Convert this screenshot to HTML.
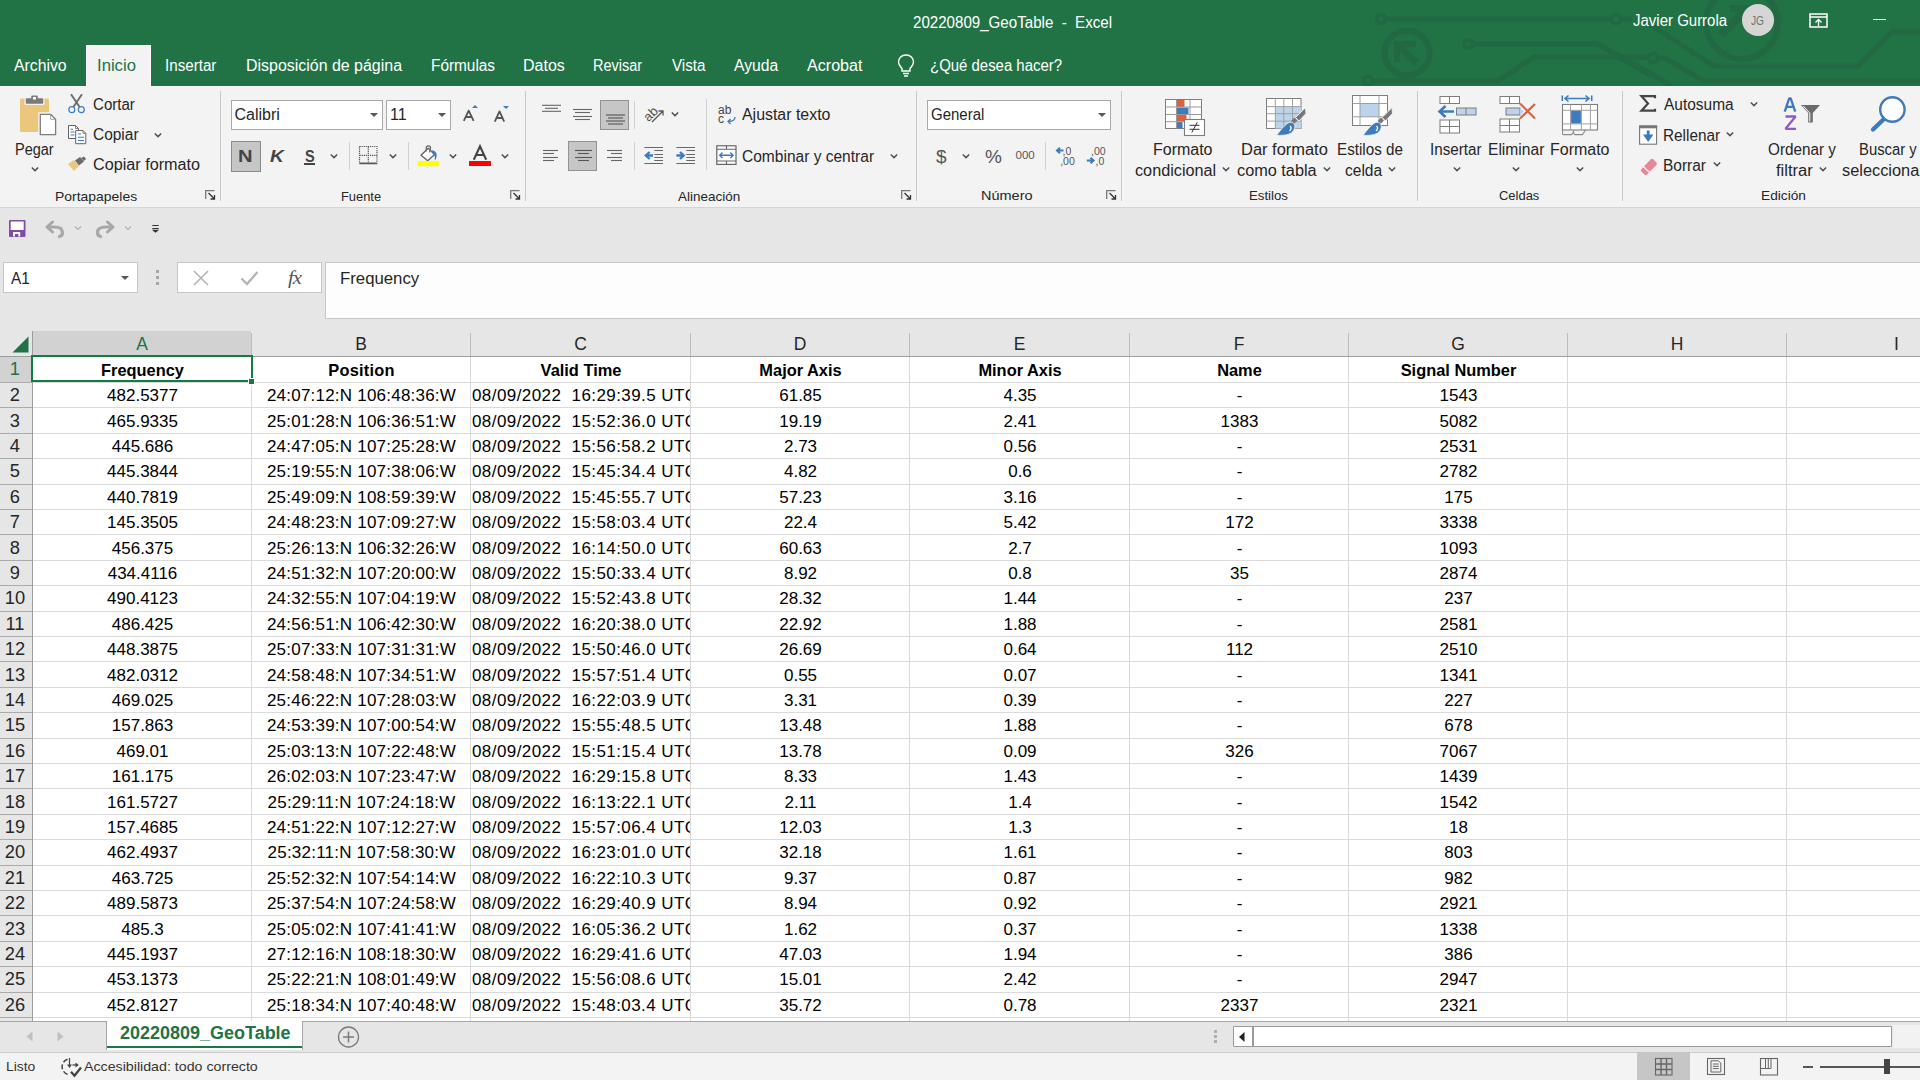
<!DOCTYPE html><html><head><meta charset="utf-8"><style>
html,body{margin:0;padding:0;width:1920px;height:1080px;overflow:hidden;background:#e6e6e6;position:relative;font-family:"Liberation Sans",sans-serif;}
.t{position:absolute;white-space:pre;line-height:1;}
svg{overflow:visible}
</style></head><body>
<div style="position:absolute;left:0px;top:0px;width:1920px;height:86px;background:#217346"></div>
<svg style="position:absolute;left:0px;top:0px;" width="1920" height="86" viewBox="0 0 1920 86"><g fill="none" stroke="#226843" stroke-width="5">
<path d="M1386 19 H1611"/><circle cx="1381" cy="19" r="4.5" stroke-width="3.5"/><circle cx="1616" cy="19" r="4.5" stroke-width="3.5"/><path d="M1621 19 H1632"/>
<circle cx="1407" cy="53" r="22.5" stroke-width="6"/>
<path d="M1473 44 H1598 L1650 75" /><circle cx="1468" cy="44" r="4.5" stroke-width="3.5"/>
<path d="M1373 81 H1498 L1534 57 H1647"/><circle cx="1368" cy="81" r="4.5" stroke-width="3.5"/>
<path d="M1658 58 H1665 L1704 81 H1920"/><circle cx="1653" cy="58" r="4.5" stroke-width="3.5"/>
<path d="M1620 56 L1672 86"/>
<path d="M1640 18 L1714 66 H1858 L1892 32 H1920"/>
<circle cx="1742" cy="23" r="36" stroke-width="6"/>
</g>
<g fill="#226843"><path d="M1394 41 H1416 V47 H1405 L1418.5 60.5 L1413.5 65.5 L1400 52 V62 H1394 Z"/>
<path d="M1730 5 H1752 V27 H1744 V18 L1724 38 L1718 32 L1738 12 H1730 Z"/></g></svg>
<div class="t" style="left:913.40px;top:15.19px;font-size:15.6px;color:#ffffff;font-weight:400;transform-origin:0 0;transform:scaleX(0.9688);">20220809_GeoTable  -  Excel</div>
<div class="t" style="left:1633.30px;top:12.96px;font-size:16px;color:#ffffff;font-weight:400;transform-origin:0 0;transform:scaleX(0.9366);">Javier Gurrola</div>
<div style="position:absolute;left:1742px;top:4px;width:32px;height:32px;border-radius:50%;background:#d6d6d6"></div>
<div class="t" style="left:1750.50px;top:14.62px;font-size:12.5px;color:#737373;font-weight:400;transform-origin:0 0;transform:scaleX(0.8197);">JG</div>
<svg style="position:absolute;left:1809px;top:13px;" width="20" height="16" viewBox="0 0 20 16"><rect x="1" y="1" width="17" height="13" fill="none" stroke="#fff" stroke-width="1.5"/><path d="M1 4 H18" stroke="#fff" stroke-width="1.5"/><path d="M9.5 13 V7 M6.5 9.5 L9.5 6.5 L12.5 9.5" stroke="#fff" stroke-width="1.3" fill="none"/></svg>
<div style="position:absolute;left:1873px;top:19px;width:13px;height:1.2px;background:#fff"></div>
<div style="position:absolute;left:86px;top:45px;width:65px;height:41px;background:#f3f3f3;box-shadow:inset 1px 1px 0 #fff,inset -1px 0 0 #fff"></div>
<div class="t" style="left:14.00px;top:57.66px;font-size:16px;color:#ffffff;font-weight:400;transform-origin:0 0;transform:scaleX(0.9859);">Archivo</div>
<div class="t" style="left:96.96px;top:57.66px;font-size:16px;color:#217346;font-weight:400;transform-origin:0 0;transform:scaleX(1.0424);">Inicio</div>
<div class="t" style="left:164.65px;top:57.66px;font-size:16px;color:#ffffff;font-weight:400;transform-origin:0 0;transform:scaleX(0.9478);">Insertar</div>
<div class="t" style="left:245.90px;top:57.66px;font-size:16px;color:#ffffff;font-weight:400;transform-origin:0 0;transform:scaleX(0.9965);">Disposición de página</div>
<div class="t" style="left:430.74px;top:57.66px;font-size:16px;color:#ffffff;font-weight:400;transform-origin:0 0;transform:scaleX(0.9607);">Fórmulas</div>
<div class="t" style="left:523.00px;top:57.66px;font-size:16px;color:#ffffff;font-weight:400;transform-origin:0 0;transform:scaleX(1.0001);">Datos</div>
<div class="t" style="left:593.10px;top:57.66px;font-size:16px;color:#ffffff;font-weight:400;transform-origin:0 0;transform:scaleX(0.9034);">Revisar</div>
<div class="t" style="left:671.80px;top:57.66px;font-size:16px;color:#ffffff;font-weight:400;transform-origin:0 0;transform:scaleX(0.9468);">Vista</div>
<div class="t" style="left:734.00px;top:57.66px;font-size:16px;color:#ffffff;font-weight:400;transform-origin:0 0;transform:scaleX(0.9783);">Ayuda</div>
<div class="t" style="left:807.40px;top:57.66px;font-size:16px;color:#ffffff;font-weight:400;transform-origin:0 0;transform:scaleX(1.0055);">Acrobat</div>
<div class="t" style="left:930.37px;top:57.66px;font-size:16px;color:#ffffff;font-weight:400;transform-origin:0 0;transform:scaleX(0.9337);">¿Qué desea hacer?</div>
<svg style="position:absolute;left:896px;top:53px;" width="20" height="24" viewBox="0 0 20 24"><path d="M10 2 C5 2 2.5 5.5 2.5 9 C2.5 12 4.5 13.5 6 15.5 V18 H14 V15.5 C15.5 13.5 17.5 12 17.5 9 C17.5 5.5 15 2 10 2 Z" fill="none" stroke="#fff" stroke-width="1.4"/><path d="M7 20.5 H13 M8 23 H12" stroke="#fff" stroke-width="1.4"/></svg>
<div style="position:absolute;left:0px;top:86px;width:1920px;height:121px;background:#f3f3f3"></div>
<div style="position:absolute;left:0px;top:207px;width:1920px;height:1px;background:#d5d5d5"></div>
<div style="position:absolute;left:220px;top:91px;width:1px;height:110px;background:#c8c8c8"></div>
<div style="position:absolute;left:525px;top:91px;width:1px;height:110px;background:#c8c8c8"></div>
<div style="position:absolute;left:916px;top:91px;width:1px;height:110px;background:#c8c8c8"></div>
<div style="position:absolute;left:1121px;top:91px;width:1px;height:110px;background:#c8c8c8"></div>
<div style="position:absolute;left:1417px;top:91px;width:1px;height:110px;background:#c8c8c8"></div>
<div style="position:absolute;left:1622px;top:91px;width:1px;height:110px;background:#c8c8c8"></div>
<div class="t" style="left:55.26px;top:189.66px;font-size:13.4px;color:#262626;font-weight:400;transform-origin:0 0;transform:scaleX(1.0407);">Portapapeles</div>
<div class="t" style="left:340.94px;top:189.66px;font-size:13.4px;color:#262626;font-weight:400;transform-origin:0 0;transform:scaleX(0.9617);">Fuente</div>
<div class="t" style="left:678.30px;top:189.86px;font-size:13.4px;color:#262626;font-weight:400;transform-origin:0 0;transform:scaleX(1.0059);">Alineación</div>
<div class="t" style="left:981.22px;top:189.16px;font-size:13.4px;color:#262626;font-weight:400;transform-origin:0 0;transform:scaleX(1.0828);">Número</div>
<div class="t" style="left:1248.71px;top:189.46px;font-size:13.4px;color:#262626;font-weight:400;transform-origin:0 0;transform:scaleX(0.9885);">Estilos</div>
<div class="t" style="left:1498.60px;top:189.16px;font-size:13.4px;color:#262626;font-weight:400;transform-origin:0 0;transform:scaleX(0.9670);">Celdas</div>
<div class="t" style="left:1761.48px;top:189.46px;font-size:13.4px;color:#262626;font-weight:400;transform-origin:0 0;transform:scaleX(1.0242);">Edición</div>
<svg style="position:absolute;left:205px;top:190px;" width="11" height="10" viewBox="0 0 11 10"><path d="M0.7 9 V0.7 H9.5" fill="none" stroke="#777" stroke-width="1.3"/><path d="M3.5 3 L9.3 8.8 M5.5 9 H9.5 V5" fill="none" stroke="#333" stroke-width="1.3"/></svg>
<svg style="position:absolute;left:510px;top:190px;" width="11" height="10" viewBox="0 0 11 10"><path d="M0.7 9 V0.7 H9.5" fill="none" stroke="#777" stroke-width="1.3"/><path d="M3.5 3 L9.3 8.8 M5.5 9 H9.5 V5" fill="none" stroke="#333" stroke-width="1.3"/></svg>
<svg style="position:absolute;left:901px;top:190px;" width="11" height="10" viewBox="0 0 11 10"><path d="M0.7 9 V0.7 H9.5" fill="none" stroke="#777" stroke-width="1.3"/><path d="M3.5 3 L9.3 8.8 M5.5 9 H9.5 V5" fill="none" stroke="#333" stroke-width="1.3"/></svg>
<svg style="position:absolute;left:1106px;top:190px;" width="11" height="10" viewBox="0 0 11 10"><path d="M0.7 9 V0.7 H9.5" fill="none" stroke="#777" stroke-width="1.3"/><path d="M3.5 3 L9.3 8.8 M5.5 9 H9.5 V5" fill="none" stroke="#333" stroke-width="1.3"/></svg>
<svg style="position:absolute;left:18px;top:94px;" width="42" height="44" viewBox="0 0 42 44"><rect x="2" y="4.5" width="29" height="33.5" rx="1.5" fill="#ebc77e"/>
<rect x="6.5" y="2.5" width="20" height="8.5" rx="1" fill="#f3f3f3"/>
<rect x="7.8" y="4.3" width="17.4" height="5.4" rx="1" fill="#7a7a7a"/><rect x="13.2" y="1.5" width="6.6" height="5.5" rx="1.2" fill="#7a7a7a"/><rect x="15" y="3" width="3" height="2.5" fill="#fff"/>
<path d="M21.5 19.5 H33 L38.2 24.8 V41.3 H21.5 Z" fill="#f3f3f3" stroke="#f3f3f3" stroke-width="2.5"/>
<path d="M22.3 20.3 H32.6 L37.6 25.3 V40.6 H22.3 Z" fill="#fff" stroke="#7d7d7d" stroke-width="1.3" stroke-linejoin="round"/><path d="M32.6 20.3 V25.3 H37.6" fill="none" stroke="#9a9a9a" stroke-width="0.9"/></svg>
<div class="t" style="left:14.69px;top:142.36px;font-size:16px;color:#262626;font-weight:400;transform-origin:0 0;transform:scaleX(0.9064);">Pegar</div>
<svg style="position:absolute;left:30px;top:164.5px;" width="10" height="8" viewBox="0 0 10 8"><path d="M1.80 2.40 L5 5.60 L8.20 2.40" fill="none" stroke="#505050" stroke-width="1.45"/></svg>
<svg style="position:absolute;left:66px;top:93px;" width="22" height="22" viewBox="0 0 22 22"><path d="M5 1.2 L13.8 14.2 M16 1.2 L7.2 14.2" stroke="#6b6b6b" stroke-width="1.9" fill="none"/>
<circle cx="5.8" cy="16.7" r="3" fill="#f3f3f3" stroke="#3d7bbf" stroke-width="1.2"/><circle cx="15.3" cy="16.7" r="3" fill="#f3f3f3" stroke="#3d7bbf" stroke-width="1.2"/></svg>
<div class="t" style="left:92.80px;top:96.66px;font-size:16px;color:#262626;font-weight:400;transform-origin:0 0;transform:scaleX(0.9418);">Cortar</div>
<svg style="position:absolute;left:66px;top:124px;" width="22" height="22" viewBox="0 0 22 22"><path d="M2.5 1.5 H9.5 L12.5 4.5 V14.5 H2.5 Z" fill="#fff" stroke="#666" stroke-width="1"/><path d="M9.5 1.5 V4.5 H12.5" fill="none" stroke="#666" stroke-width="0.8"/>
<path d="M4.5 5.2 H7 M4.5 8 H8.5 M4.5 11 H8.5" stroke="#3d7bbf" stroke-width="1.1"/>
<path d="M9.7 6.5 H17 L19.8 9.3 V19.7 H9.7 Z" fill="#fff" stroke="#666" stroke-width="1"/><path d="M17 6.5 V9.3 H19.8" fill="none" stroke="#666" stroke-width="0.8"/>
<path d="M12 10 H15 M12 13.3 H18 M12 16.5 H18" stroke="#3d7bbf" stroke-width="1.1"/></svg>
<div class="t" style="left:92.80px;top:126.96px;font-size:16px;color:#262626;font-weight:400;transform-origin:0 0;transform:scaleX(0.9664);">Copiar</div>
<svg style="position:absolute;left:153px;top:131px;" width="10" height="8" viewBox="0 0 10 8"><path d="M1.80 2.40 L5 5.60 L8.20 2.40" fill="none" stroke="#505050" stroke-width="1.45"/></svg>
<svg style="position:absolute;left:66px;top:156px;" width="22" height="18" viewBox="0 0 22 18"><path d="M2 8 L8 4 L13 10 L8 15 Z" fill="#ebc77e"/>
<path d="M9 4.5 L14 1 L18 5.5 L13 9.5 Z" fill="#6b6b6b"/><path d="M15 2 L18 0.5 L20 3 L18 5" fill="#6b6b6b"/></svg>
<div class="t" style="left:92.80px;top:157.46px;font-size:16px;color:#262626;font-weight:400;transform-origin:0 0;transform:scaleX(1.0121);">Copiar formato</div>
<div style="position:absolute;left:231px;top:100px;width:152px;height:30px;background:#fff;border:1px solid #a8a8a8;box-sizing:border-box"></div>
<div class="t " style="left:234.5px;top:107.16px;font-size:16px;color:#262626;font-weight:400;">Calibri</div>
<svg style="position:absolute;left:370px;top:113px;" width="8" height="4" viewBox="0 0 8 4"><path d="M0 0 H8 L4 4 Z" fill="#555"/></svg>
<div style="position:absolute;left:386px;top:100px;width:65px;height:30px;background:#fff;border:1px solid #a8a8a8;box-sizing:border-box"></div>
<div class="t " style="left:390px;top:107.16px;font-size:16px;color:#262626;font-weight:400;">11</div>
<svg style="position:absolute;left:438px;top:113px;" width="8" height="4" viewBox="0 0 8 4"><path d="M0 0 H8 L4 4 Z" fill="#555"/></svg>
<svg style="position:absolute;left:462px;top:108px;" width="14" height="14" viewBox="0 0 14 14"><path d="M1.8 12.8 L6.7 2.6 L11.6 12.8 M3.7 9 H9.7" fill="none" stroke="#555" stroke-width="1.8" stroke-linejoin="round"/></svg>
<svg style="position:absolute;left:472px;top:105px;" width="6" height="3" viewBox="0 0 6 3"><path d="M0 3 L3 0 L6 3 Z" fill="#3d7bbf"/></svg>
<svg style="position:absolute;left:493px;top:109px;" width="14" height="14" viewBox="0 0 14 14"><path d="M1.8 12.6 L6.5 2.4 L11.2 12.6 M3.6 9 H9.4" fill="none" stroke="#555" stroke-width="1.8" stroke-linejoin="round"/></svg>
<svg style="position:absolute;left:502.5px;top:105.8px;" width="6" height="3" viewBox="0 0 6 3"><path d="M0 0 L3 3 L6 0 Z" fill="#3d7bbf"/></svg>
<div style="position:absolute;left:231px;top:141px;width:30px;height:30.5px;background:#c6c6c6;border:1px solid #8a8a8a;box-sizing:border-box"></div>
<div class="t" style="left:238.08px;top:148.43px;font-size:16.5px;color:#444;font-weight:700;transform-origin:0 0;transform:scaleX(1.2200);">N</div>
<div class="t" style="left:269.84px;top:148.43px;font-size:16.5px;color:#444;font-weight:700;transform-origin:0 0;transform:scaleX(1.1636);font-style:italic">K</div>
<div class="t" style="left:304.80px;top:148.43px;font-size:16.5px;color:#444;font-weight:700;transform-origin:0 0;transform:scaleX(0.8818);">S</div>
<div style="position:absolute;left:304px;top:163.3px;width:10.5px;height:1.4px;background:#444"></div>
<svg style="position:absolute;left:329px;top:152px;" width="10" height="8" viewBox="0 0 10 8"><path d="M1.80 2.40 L5 5.60 L8.20 2.40" fill="none" stroke="#505050" stroke-width="1.45"/></svg>
<div style="position:absolute;left:349px;top:142px;width:1px;height:28px;background:#d0d0d0"></div>
<svg style="position:absolute;left:359px;top:146px;" width="20" height="19" viewBox="0 0 20 19"><path d="M0.5 0.5 H18 V16.3 M0.5 0.5 V16.3 M9.3 0.5 V16.3 M0.5 9.3 H18" fill="none" stroke="#555" stroke-width="1.2" stroke-dasharray="1.2 0.9"/><path d="M0.3 17.4 H18.3" stroke="#555" stroke-width="1.7"/></svg>
<svg style="position:absolute;left:388px;top:152px;" width="10" height="8" viewBox="0 0 10 8"><path d="M1.80 2.40 L5 5.60 L8.20 2.40" fill="none" stroke="#505050" stroke-width="1.45"/></svg>
<div style="position:absolute;left:408px;top:142px;width:1px;height:28px;background:#d0d0d0"></div>
<svg style="position:absolute;left:417px;top:144px;" width="22" height="23" viewBox="0 0 22 23"><path d="M4 11.3 L11.2 4.2 L17.6 10.4 L10.7 16.8 Z" fill="#fff" stroke="#666" stroke-width="1.4" stroke-linejoin="round"/>
<path d="M9.2 7.5 V4 A2.2 2.2 0 0 1 13.6 4 L12.5 8.5" fill="none" stroke="#666" stroke-width="1.2"/>
<path d="M15 6.3 C18.8 6.8 21.3 10 18.6 15.8 L17.6 15.6 C18.2 12.5 17.8 10.5 15.6 9.6 Z" fill="#3d7bbf"/>
<rect x="0.6" y="17" width="21.3" height="5.2" fill="#ffff00"/></svg>
<svg style="position:absolute;left:447.5px;top:152px;" width="10" height="8" viewBox="0 0 10 8"><path d="M1.80 2.40 L5 5.60 L8.20 2.40" fill="none" stroke="#505050" stroke-width="1.45"/></svg>
<svg style="position:absolute;left:472px;top:145px;" width="16" height="16" viewBox="0 0 16 16"><path d="M1.8 14.8 L8 1.2 L14.2 14.8 M4.3 10 H11.7" fill="none" stroke="#444" stroke-width="2.1"/></svg>
<div style="position:absolute;left:469px;top:161px;width:22px;height:5px;background:#ff0000"></div>
<svg style="position:absolute;left:499.5px;top:152px;" width="10" height="8" viewBox="0 0 10 8"><path d="M1.80 2.40 L5 5.60 L8.20 2.40" fill="none" stroke="#505050" stroke-width="1.45"/></svg>
<svg style="position:absolute;left:541.5px;top:105.2px;" width="24" height="24" viewBox="0 0 24 24"><path d="M0 0.30 H19" stroke="#666" stroke-width="1.1"/><path d="M3 3.30 H16" stroke="#666" stroke-width="1.1"/><path d="M0 6.30 H19" stroke="#666" stroke-width="1.1"/></svg>
<svg style="position:absolute;left:573px;top:109px;" width="24" height="24" viewBox="0 0 24 24"><path d="M0 0.50 H19" stroke="#666" stroke-width="1.1"/><path d="M2 3.50 H17" stroke="#666" stroke-width="1.1"/><path d="M0 7.50 H19" stroke="#666" stroke-width="1.1"/><path d="M2 10.50 H17" stroke="#666" stroke-width="1.1"/></svg>
<div style="position:absolute;left:600px;top:100px;width:29px;height:30px;background:#c6c6c6;border:1px solid #929292;box-sizing:border-box"></div>
<svg style="position:absolute;left:605.5px;top:113.5px;" width="24" height="24" viewBox="0 0 24 24"><path d="M0 1.00 H19" stroke="#555" stroke-width="1.1"/><path d="M2 4.00 H17" stroke="#555" stroke-width="1.1"/><path d="M0 7.00 H19" stroke="#555" stroke-width="1.1"/><path d="M2 10.00 H17" stroke="#555" stroke-width="1.1"/></svg>
<div style="position:absolute;left:634px;top:101px;width:1px;height:28px;background:#d0d0d0"></div>
<svg style="position:absolute;left:643px;top:104px;" width="22" height="20" viewBox="0 0 22 20"><g transform="rotate(-45 8 10)"><text x="0.5" y="14" font-family="Liberation Sans" font-size="13" fill="#555">ab</text></g>
<path d="M9 18 L20 7 M15.5 7 H20 V11.5" fill="none" stroke="#555" stroke-width="1.3"/></svg>
<svg style="position:absolute;left:670px;top:110px;" width="10" height="8" viewBox="0 0 10 8"><path d="M1.80 2.40 L5 5.60 L8.20 2.40" fill="none" stroke="#505050" stroke-width="1.45"/></svg>
<div style="position:absolute;left:706px;top:99px;width:1px;height:71px;background:#d0d0d0"></div>
<svg style="position:absolute;left:718px;top:104px;" width="20" height="21" viewBox="0 0 20 21"><text x="0" y="9.7" font-family="Liberation Sans" font-size="12" fill="#444">ab</text><text x="0" y="18.6" font-family="Liberation Sans" font-size="12" fill="#444">c</text>
<path d="M17 13 C17 16.5 14.5 17.5 10.5 17.5 M12.5 15 L10 17.5 L12.5 20" fill="none" stroke="#3d7bbf" stroke-width="1.3"/></svg>
<div class="t" style="left:742.00px;top:107.06px;font-size:16px;color:#262626;font-weight:400;transform-origin:0 0;transform:scaleX(0.9940);">Ajustar texto</div>
<svg style="position:absolute;left:543px;top:150px;" width="24" height="24" viewBox="0 0 24 24"><path d="M0 0.50 H15" stroke="#666" stroke-width="1.1"/><path d="M0 3.50 H11" stroke="#666" stroke-width="1.1"/><path d="M0 7.50 H15" stroke="#666" stroke-width="1.1"/><path d="M0 10.50 H11" stroke="#666" stroke-width="1.1"/></svg>
<div style="position:absolute;left:568px;top:141px;width:29px;height:30px;background:#c6c6c6;border:1px solid #929292;box-sizing:border-box"></div>
<svg style="position:absolute;left:574.5px;top:150px;" width="24" height="24" viewBox="0 0 24 24"><path d="M0 0.50 H17" stroke="#555" stroke-width="1.1"/><path d="M3 3.50 H14" stroke="#555" stroke-width="1.1"/><path d="M0 7.50 H17" stroke="#555" stroke-width="1.1"/><path d="M3 10.50 H14" stroke="#555" stroke-width="1.1"/></svg>
<svg style="position:absolute;left:607px;top:150px;" width="24" height="24" viewBox="0 0 24 24"><path d="M0 0.50 H15" stroke="#666" stroke-width="1.1"/><path d="M4 3.50 H15" stroke="#666" stroke-width="1.1"/><path d="M0 7.50 H15" stroke="#666" stroke-width="1.1"/><path d="M4 10.50 H15" stroke="#666" stroke-width="1.1"/></svg>
<div style="position:absolute;left:634px;top:142px;width:1px;height:28px;background:#d0d0d0"></div>
<svg style="position:absolute;left:644px;top:147px;" width="20" height="19" viewBox="0 0 20 19"><path d="M0.4 0.5 H19 M10.3 3.5 H19 M10.3 7.5 H19 M10.3 10.5 H19 M10.3 13.5 H19 M0.4 16.5 H19" stroke="#666" stroke-width="1.1"/>
<path d="M9 8.5 H2.5 M5.6 5 L1.8 8.5 L5.6 12" stroke="#3d7bbf" stroke-width="2.3" fill="none"/></svg>
<svg style="position:absolute;left:676px;top:147px;" width="20" height="19" viewBox="0 0 20 19"><path d="M0.4 0.5 H19 M10.3 3.5 H19 M10.3 7.5 H19 M10.3 10.5 H19 M10.3 13.5 H19 M0.4 16.5 H19" stroke="#666" stroke-width="1.1"/>
<path d="M0.4 8.5 H7 M4 5 L7.8 8.5 L4 12" stroke="#3d7bbf" stroke-width="2.3" fill="none"/></svg>
<svg style="position:absolute;left:716px;top:145px;" width="21" height="20" viewBox="0 0 21 20"><rect x="0.8" y="0.8" width="19.2" height="18.6" fill="#fff" stroke="#666" stroke-width="1.2"/>
<path d="M0.8 4.2 H20 M0.8 16 H20 M10.5 0.8 V4.2 M10.5 16 V19.4" stroke="#666" stroke-width="1.1"/>
<path d="M3.8 10.3 H17 M6.5 7.5 L3.7 10.3 L6.5 13.1 M14.3 7.5 L17.1 10.3 L14.3 13.1" stroke="#3d7bbf" stroke-width="1.4" fill="none"/></svg>
<div class="t" style="left:742.00px;top:148.56px;font-size:16px;color:#262626;font-weight:400;transform-origin:0 0;transform:scaleX(0.9706);">Combinar y centrar</div>
<svg style="position:absolute;left:889px;top:152px;" width="10" height="8" viewBox="0 0 10 8"><path d="M1.80 2.40 L5 5.60 L8.20 2.40" fill="none" stroke="#505050" stroke-width="1.45"/></svg>
<div style="position:absolute;left:927px;top:100px;width:184px;height:30px;background:#fff;border:1px solid #a8a8a8;box-sizing:border-box"></div>
<div class="t" style="left:930.70px;top:106.96px;font-size:16px;color:#262626;font-weight:400;transform-origin:0 0;transform:scaleX(0.9367);">General</div>
<svg style="position:absolute;left:1097.7px;top:113px;" width="8" height="4" viewBox="0 0 8 4"><path d="M0 0 H8 L4 4 Z" fill="#555"/></svg>
<div class="t " style="left:936px;top:146.92px;font-size:19px;color:#555;font-weight:400;">$</div>
<svg style="position:absolute;left:961px;top:151.5px;" width="10" height="8" viewBox="0 0 10 8"><path d="M1.80 2.40 L5 5.60 L8.20 2.40" fill="none" stroke="#505050" stroke-width="1.45"/></svg>
<div class="t " style="left:985px;top:146.92px;font-size:19px;color:#555;font-weight:400;">%</div>
<div class="t " style="left:1015.5px;top:149.87px;font-size:11.5px;color:#555;font-weight:400;">000</div>
<div style="position:absolute;left:1045px;top:142px;width:1px;height:28px;background:#d0d0d0"></div>
<svg style="position:absolute;left:1055px;top:146px;" width="21" height="21" viewBox="0 0 21 21"><text x="7.5" y="8.7" font-family="Liberation Sans" font-size="10.5" fill="#555">,0</text><text x="5.2" y="18.7" font-family="Liberation Sans" font-size="10.5" fill="#555">,00</text>
<path d="M8.5 4.5 H2.2 M5 1.7 L2 4.5 L5 7.3" stroke="#3d7bbf" stroke-width="2.1" fill="none"/></svg>
<svg style="position:absolute;left:1086px;top:146px;" width="21" height="21" viewBox="0 0 21 21"><text x="5" y="8.7" font-family="Liberation Sans" font-size="10.5" fill="#555">,00</text><text x="9.5" y="18.7" font-family="Liberation Sans" font-size="10.5" fill="#555">,0</text>
<path d="M0.8 14.5 H7.2 M4.5 11.7 L7.5 14.5 L4.5 17.3" stroke="#3d7bbf" stroke-width="2.1" fill="none"/></svg>
<svg style="position:absolute;left:1165px;top:99px;" width="41" height="38" viewBox="0 0 41 38"><rect x="0.5" y="0.5" width="36" height="29" fill="#fff" stroke="#7d7d7d" stroke-width="1"/>
<rect x="12" y="1" width="7.5" height="7" fill="#e0603b"/><rect x="12" y="8.5" width="11.5" height="7" fill="#3d7bbf"/><rect x="12" y="16" width="9.5" height="6.5" fill="#e0603b"/><rect x="12" y="23" width="5.5" height="6" fill="#3d7bbf"/>
<path d="M11.5 0.5 V29.5 M25 0.5 V29.5 M0.5 8 H36.5 M0.5 15.5 H36.5 M0.5 22.7 H36.5" stroke="#9a9a9a" stroke-width="1"/>
<rect x="19.5" y="20.5" width="20" height="16" fill="#fff" stroke="#7d7d7d" stroke-width="1.1"/>
<path d="M24.5 26.3 H34.5 M24.5 30.3 H34.5 M32.3 23.2 L26.8 33.5" stroke="#333" stroke-width="1"/></svg>
<div class="t" style="left:1153.40px;top:142.21px;font-size:16px;color:#262626;font-weight:400;transform-origin:0 0;transform:scaleX(0.9988);">Formato</div>
<div class="t" style="left:1135.00px;top:163.26px;font-size:16px;color:#262626;font-weight:400;transform-origin:0 0;transform:scaleX(1.0138);">condicional</div>
<svg style="position:absolute;left:1221px;top:164.8px;" width="10" height="8" viewBox="0 0 10 8"><path d="M1.80 2.40 L5 5.60 L8.20 2.40" fill="none" stroke="#505050" stroke-width="1.45"/></svg>
<svg style="position:absolute;left:1266px;top:98px;" width="42" height="39" viewBox="0 0 42 39"><rect x="0.5" y="0.5" width="34.5" height="30" fill="#fff" stroke="#7d7d7d" stroke-width="1"/>
<rect x="9.3" y="8.6" width="25.7" height="21.9" fill="#bcd3ec"/>
<path d="M9.3 0.5 V30.5 M17.8 0.5 V30.5 M26.5 0.5 V30.5 M0.5 8.6 H35 M0.5 15.7 H35 M0.5 23.1 H35" stroke="#a0a0a0" stroke-width="1"/>
<path d="M39.5 9.5 L40 15.5 L33 23 L29.5 19.5 Z" fill="#777" stroke="#f3f3f3" stroke-width="1"/>
<path d="M30 21 L26.5 24.5" stroke="#777" stroke-width="4"/>
<path d="M27.2 24.8 C30 27.5 29 32 25.3 35 C21.5 37.5 14.5 37.5 10.6 37.3 C14 33 17 28.5 21 25.7 C23 24.3 25.5 23.7 27.2 24.8 Z" fill="#3d7bbf" stroke="#f3f3f3" stroke-width="0.8"/>
<path d="M24 28 C25.5 29 25.5 31.5 23.5 33" fill="none" stroke="#fff" stroke-width="1.4"/></svg>
<div class="t" style="left:1240.57px;top:142.21px;font-size:16px;color:#262626;font-weight:400;transform-origin:0 0;transform:scaleX(1.0279);">Dar formato</div>
<div class="t" style="left:1236.90px;top:163.26px;font-size:16px;color:#262626;font-weight:400;transform-origin:0 0;transform:scaleX(1.0170);">como tabla</div>
<svg style="position:absolute;left:1321.6px;top:164.8px;" width="10" height="8" viewBox="0 0 10 8"><path d="M1.80 2.40 L5 5.60 L8.20 2.40" fill="none" stroke="#505050" stroke-width="1.45"/></svg>
<svg style="position:absolute;left:1352px;top:95px;" width="42" height="41" viewBox="0 0 42 41"><rect x="0.5" y="0.5" width="35" height="30" fill="#fff" stroke="#7d7d7d" stroke-width="1"/>
<rect x="8" y="8.5" width="19" height="13.3" fill="#bcd3ec"/>
<path d="M8 0.5 V30.5 M27 0.5 V30.5 M0.5 8.5 H35.5 M0.5 21.8 H35.5" stroke="#a0a0a0" stroke-width="1"/>
<path d="M40 12.5 L40.5 18.5 L33.5 26 L30 22.5 Z" fill="#777" stroke="#f3f3f3" stroke-width="1"/>
<path d="M30.5 24 L27 27.5" stroke="#777" stroke-width="4"/>
<path d="M27.7 27.8 C30.5 30.5 29.5 35 25.8 38 C22 40.5 15 40.5 11.1 40.3 C14.5 36 17.5 31.5 21.5 28.7 C23.5 27.3 26 26.7 27.7 27.8 Z" fill="#3d7bbf" stroke="#f3f3f3" stroke-width="0.8"/>
<path d="M24.5 31 C26 32 26 34.5 24 36" fill="none" stroke="#fff" stroke-width="1.4"/></svg>
<div class="t" style="left:1337.05px;top:142.21px;font-size:16px;color:#262626;font-weight:400;transform-origin:0 0;transform:scaleX(0.9493);">Estilos de</div>
<div class="t" style="left:1345.00px;top:163.26px;font-size:16px;color:#262626;font-weight:400;transform-origin:0 0;transform:scaleX(0.9700);">celda</div>
<svg style="position:absolute;left:1387px;top:164.8px;" width="10" height="8" viewBox="0 0 10 8"><path d="M1.80 2.40 L5 5.60 L8.20 2.40" fill="none" stroke="#505050" stroke-width="1.45"/></svg>
<svg style="position:absolute;left:1437px;top:96px;" width="40" height="40" viewBox="0 0 40 40"><rect x="3" y="0.5" width="19.5" height="7" fill="#fff" stroke="#7d7d7d" stroke-width="1"/><path d="M12.5 0.5 V7.5" stroke="#7d7d7d"/>
<rect x="19.5" y="12" width="19.5" height="7" fill="#bcd3ec" stroke="#7d7d7d" stroke-width="1"/><path d="M29 12 V19" stroke="#7d7d7d"/>
<path d="M17 15.5 H4 M8.5 10 L2.5 15.5 L8.5 21" stroke="#3d7bbf" stroke-width="2.6" fill="none"/>
<rect x="3" y="24" width="19.5" height="13" fill="#fff" stroke="#7d7d7d" stroke-width="1"/><path d="M12.5 24 V37 M3 30.5 H22.5" stroke="#7d7d7d"/></svg>
<div class="t" style="left:1429.75px;top:142.16px;font-size:16px;color:#262626;font-weight:400;transform-origin:0 0;transform:scaleX(0.9515);">Insertar</div>
<svg style="position:absolute;left:1451.8px;top:164.7px;" width="10" height="8" viewBox="0 0 10 8"><path d="M1.80 2.40 L5 5.60 L8.20 2.40" fill="none" stroke="#505050" stroke-width="1.45"/></svg>
<svg style="position:absolute;left:1498.5px;top:96px;" width="40" height="38" viewBox="0 0 40 38"><rect x="1" y="0.5" width="19.5" height="7" fill="#fff" stroke="#7d7d7d" stroke-width="1"/><path d="M10.5 0.5 V7.5" stroke="#7d7d7d"/>
<rect x="7" y="12" width="14" height="7" fill="#bcd3ec" stroke="#7d7d7d" stroke-width="1"/><path d="M21 12 L25 15.5 L21 19" fill="#bcd3ec"/>
<rect x="1" y="23" width="19.5" height="13" fill="#fff" stroke="#7d7d7d" stroke-width="1"/><path d="M10.5 23 V36 M1 29.5 H20.5" stroke="#7d7d7d"/>
<path d="M21 7.5 L36 22.5 M36 8 L21 22.5" stroke="#e0603b" stroke-width="2.2"/></svg>
<div class="t" style="left:1487.63px;top:142.16px;font-size:16px;color:#262626;font-weight:400;transform-origin:0 0;transform:scaleX(0.9746);">Eliminar</div>
<svg style="position:absolute;left:1511.2px;top:164.7px;" width="10" height="8" viewBox="0 0 10 8"><path d="M1.80 2.40 L5 5.60 L8.20 2.40" fill="none" stroke="#505050" stroke-width="1.45"/></svg>
<svg style="position:absolute;left:1561px;top:95px;" width="38" height="41" viewBox="0 0 38 41"><path d="M1.3 0.5 V6 M30.7 0.5 V6 M4 3.5 H28 M7.5 0.5 L4 3.5 L7.5 6.5 M24.5 0.5 L28 3.5 L24.5 6.5" stroke="#3d7bbf" stroke-width="1.6" fill="none"/>
<rect x="1.5" y="9.5" width="35" height="25.5" fill="#fff" stroke="#7d7d7d" stroke-width="1.1"/>
<path d="M9.6 9.5 V35 M20.4 9.5 V35 M29.4 9.5 V35 M1.5 15.3 H36.5 M1.5 28.9 H36.5" stroke="#a0a0a0" stroke-width="1"/>
<rect x="10.1" y="15.8" width="9.8" height="12.6" fill="#3d7bbf"/>
<path d="M1.5 35 V39 Q1.5 39.6 2.5 39.6 H10.5 L12.5 37 V35 M12.5 37 Q12.8 39.6 14 39.6 H21.5 L24.5 35" fill="none" stroke="#8a8a8a" stroke-width="1.1"/></svg>
<div class="t" style="left:1549.60px;top:142.16px;font-size:16px;color:#262626;font-weight:400;transform-origin:0 0;transform:scaleX(0.9988);">Formato</div>
<svg style="position:absolute;left:1574.7px;top:164.7px;" width="10" height="8" viewBox="0 0 10 8"><path d="M1.80 2.40 L5 5.60 L8.20 2.40" fill="none" stroke="#505050" stroke-width="1.45"/></svg>
<svg style="position:absolute;left:1640px;top:95px;" width="18" height="18" viewBox="0 0 18 18"><path d="M15 3.2 V1.2 H1.5 L8 8.5 L1.5 15.7 H15 V13.7" fill="none" stroke="#444" stroke-width="2.2"/></svg>
<div class="t" style="left:1664.00px;top:97.26px;font-size:16px;color:#262626;font-weight:400;transform-origin:0 0;transform:scaleX(0.9669);">Autosuma</div>
<svg style="position:absolute;left:1748.6px;top:100.4px;" width="10" height="8" viewBox="0 0 10 8"><path d="M1.80 2.40 L5 5.60 L8.20 2.40" fill="none" stroke="#505050" stroke-width="1.45"/></svg>
<svg style="position:absolute;left:1639px;top:124.5px;" width="19" height="20" viewBox="0 0 19 20"><rect x="0.6" y="1" width="17" height="18.2" fill="#fff" stroke="#777" stroke-width="1.1"/><rect x="0" y="0.5" width="18.2" height="2.8" fill="#777"/>
<rect x="7.8" y="5.5" width="2.8" height="6" fill="#3d7bbf"/><path d="M4 9.5 H14.4 L9.2 17 Z" fill="#3d7bbf"/></svg>
<div class="t" style="left:1663.04px;top:127.76px;font-size:16px;color:#262626;font-weight:400;transform-origin:0 0;transform:scaleX(0.9585);">Rellenar</div>
<svg style="position:absolute;left:1725.2px;top:129.7px;" width="10" height="8" viewBox="0 0 10 8"><path d="M1.80 2.40 L5 5.60 L8.20 2.40" fill="none" stroke="#505050" stroke-width="1.45"/></svg>
<svg style="position:absolute;left:1639px;top:156px;" width="20" height="20" viewBox="0 0 20 20"><path d="M2.3 13.3 L11.8 3.3 Q13 2.2 14.2 3.3 L17.4 6.5 Q18.5 7.7 17.4 8.9 L7.9 18.5 Q6.7 19.6 5.5 18.5 L2.3 15.5 Q1.2 14.4 2.3 13.3 Z" fill="#e58797"/><path d="M4.5 10.8 L10.4 16.3" stroke="#f3f3f3" stroke-width="1.4"/></svg>
<div class="t" style="left:1663.03px;top:158.26px;font-size:16px;color:#262626;font-weight:400;transform-origin:0 0;transform:scaleX(0.9677);">Borrar</div>
<svg style="position:absolute;left:1711.6px;top:160.1px;" width="10" height="8" viewBox="0 0 10 8"><path d="M1.80 2.40 L5 5.60 L8.20 2.40" fill="none" stroke="#505050" stroke-width="1.45"/></svg>
<svg style="position:absolute;left:1782px;top:96px;" width="42" height="36" viewBox="0 0 42 36"><path d="M2.7 15.7 L7.2 2.3 H8.7 L13.2 15.7 M4.7 10.8 H11.2" fill="none" stroke="#3d7bbf" stroke-width="2.3" stroke-linejoin="bevel"/>
<path d="M3.5 20.5 H13.6 L3.5 32.8 H14" fill="none" stroke="#8b5cc9" stroke-width="2.3" stroke-linejoin="bevel"/>
<path d="M19 9 H38 L30.8 17 V26.5 H26.2 V17 Z" fill="#6b6b6b"/><path d="M21.3 10 L27.8 17.2 V25.5" fill="none" stroke="#fff" stroke-width="1"/></svg>
<div class="t" style="left:1767.70px;top:142.21px;font-size:16px;color:#262626;font-weight:400;transform-origin:0 0;transform:scaleX(0.9544);">Ordenar y</div>
<div class="t" style="left:1776.25px;top:163.26px;font-size:16px;color:#262626;font-weight:400;transform-origin:0 0;transform:scaleX(1.0352);">filtrar</div>
<svg style="position:absolute;left:1818.4px;top:164.8px;" width="10" height="8" viewBox="0 0 10 8"><path d="M1.80 2.40 L5 5.60 L8.20 2.40" fill="none" stroke="#505050" stroke-width="1.45"/></svg>
<svg style="position:absolute;left:1868px;top:94px;" width="40" height="40" viewBox="0 0 40 40"><path d="M16.5 24.5 L5 35.5" stroke="#3d7bbf" stroke-width="4.4" stroke-linecap="round"/><circle cx="24.4" cy="15.5" r="12.2" fill="#fff" stroke="#3d7bbf" stroke-width="2.4"/></svg>
<div class="t" style="left:1858.87px;top:142.21px;font-size:16px;color:#262626;font-weight:400;transform-origin:0 0;transform:scaleX(0.9275);">Buscar y</div>
<div class="t" style="left:1841.60px;top:163.26px;font-size:16px;color:#262626;font-weight:400;transform-origin:0 0;transform:scaleX(1.0220);">seleccionar</div>
<svg style="position:absolute;left:8px;top:219px;" width="19" height="19" viewBox="0 0 19 19"><rect x="1" y="1" width="16.5" height="17" rx="1" fill="#7e4ea8"/>
<rect x="2.7" y="2.5" width="13" height="8.5" fill="#fff"/><rect x="5.1" y="13" width="7.1" height="4.5" fill="#fff"/><rect x="7" y="15" width="3.3" height="3" fill="#7e4ea8"/></svg>
<svg style="position:absolute;left:43px;top:219px;" width="23" height="20" viewBox="0 0 23 20"><path d="M9.5 3 L4 8 L9.5 13" fill="none" stroke="#a8a8a8" stroke-width="3" stroke-linecap="round" stroke-linejoin="round"/><path d="M5 8 H11.5 C17 8 19.5 10.5 19.5 13.5 C19.5 15.5 18.5 17 16.5 17.5" fill="none" stroke="#a8a8a8" stroke-width="3.2" stroke-linecap="round"/></svg>
<svg style="position:absolute;left:72.5px;top:224.2px;" width="10" height="8" viewBox="0 0 10 8"><path d="M2.00 2.50 L5 5.50 L8.00 2.50" fill="none" stroke="#b0b0b0" stroke-width="1.1"/></svg>
<svg style="position:absolute;left:94px;top:219px;" width="23" height="20" viewBox="0 0 23 20"><path d="M13.5 3 L19 8 L13.5 13" fill="none" stroke="#a8a8a8" stroke-width="3" stroke-linecap="round" stroke-linejoin="round"/><path d="M18 8 H11.5 C6 8 3.5 10.5 3.5 13.5 C3.5 15.5 4.5 17 6.5 17.5" fill="none" stroke="#a8a8a8" stroke-width="3.2" stroke-linecap="round"/></svg>
<svg style="position:absolute;left:123.4px;top:224.2px;" width="10" height="8" viewBox="0 0 10 8"><path d="M2.00 2.50 L5 5.50 L8.00 2.50" fill="none" stroke="#b0b0b0" stroke-width="1.1"/></svg>
<svg style="position:absolute;left:151px;top:224px;" width="9" height="10" viewBox="0 0 9 10"><path d="M1.3 1.5 H7.7 M1.3 4.5 H7.7" stroke="#333" stroke-width="1"/><path d="M0.8 5.8 H8.2 L4.5 8.8 Z" fill="#333"/></svg>
<div style="position:absolute;left:3px;top:262px;width:135px;height:31px;background:#fff;border:1px solid #c6c6c6;box-sizing:border-box"></div>
<div class="t" style="left:11.00px;top:271.46px;font-size:16px;color:#262626;font-weight:400;transform-origin:0 0;transform:scaleX(0.9557);">A1</div>
<svg style="position:absolute;left:120.5px;top:275.5px;" width="8" height="4" viewBox="0 0 8 4"><path d="M0 0 H8 L4 4 Z" fill="#555"/></svg>
<div style="position:absolute;left:156px;top:270px;width:3px;height:3px;background:#a6a6a6"></div>
<div style="position:absolute;left:156px;top:276px;width:3px;height:3px;background:#a6a6a6"></div>
<div style="position:absolute;left:156px;top:282px;width:3px;height:3px;background:#a6a6a6"></div>
<div style="position:absolute;left:177px;top:262px;width:145px;height:31px;background:#fff;border:1px solid #c6c6c6;box-sizing:border-box"></div>
<svg style="position:absolute;left:193px;top:270px;" width="16" height="16" viewBox="0 0 16 16"><path d="M1 1 L15 15 M15 1 L1 15" stroke="#b4b4b4" stroke-width="1.6"/></svg>
<svg style="position:absolute;left:240px;top:270px;" width="19" height="16" viewBox="0 0 19 16"><path d="M1.5 8.5 L7 14 L17.5 2" fill="none" stroke="#b4b4b4" stroke-width="2.3"/></svg>
<div class="t" style="left:287.50px;top:268.42px;font-size:19px;color:#555;font-weight:400;transform-origin:0 0;transform:scaleX(1.0930);font-family:'Liberation Serif';font-style:italic;letter-spacing:-1px">fx</div>
<div style="position:absolute;left:325px;top:262px;width:1600px;height:57px;background:#fdfdfd;border:1px solid #c6c6c6;box-sizing:border-box"></div>
<div class="t" style="left:339.78px;top:269.73px;font-size:16.5px;color:#262626;font-weight:400;transform-origin:0 0;transform:scaleX(1.0154);">Frequency</div>
<div style="position:absolute;left:0px;top:331px;width:1920px;height:690px;background:#fff"></div>
<div style="position:absolute;left:0px;top:331px;width:1920px;height:25px;background:#e6e6e6"></div>
<div style="position:absolute;left:0px;top:356px;width:32px;height:665px;background:#e6e6e6"></div>
<div style="position:absolute;left:32px;top:331px;width:219px;height:25px;background:#d2d2d2"></div>
<div style="position:absolute;left:0px;top:356px;width:32px;height:26px;background:#d2d2d2"></div>
<svg style="position:absolute;left:12px;top:336px;" width="17" height="17" viewBox="0 0 17 17"><path d="M16.5 0.5 V16.5 H0.5 Z" fill="#217346"/></svg>
<svg style="position:absolute;left:0px;top:0px;pointer-events:none" width="1920" height="1080" viewBox="0 0 1920 1080"><path d="M32 382.5 H1920" stroke="#dadada" stroke-width="1"/><path d="M0 382.5 H32" stroke="#ababab" stroke-width="1"/><path d="M32 407.5 H1920" stroke="#dadada" stroke-width="1"/><path d="M0 407.5 H32" stroke="#ababab" stroke-width="1"/><path d="M32 433.5 H1920" stroke="#dadada" stroke-width="1"/><path d="M0 433.5 H32" stroke="#ababab" stroke-width="1"/><path d="M32 458.5 H1920" stroke="#dadada" stroke-width="1"/><path d="M0 458.5 H32" stroke="#ababab" stroke-width="1"/><path d="M32 484.5 H1920" stroke="#dadada" stroke-width="1"/><path d="M0 484.5 H32" stroke="#ababab" stroke-width="1"/><path d="M32 509.5 H1920" stroke="#dadada" stroke-width="1"/><path d="M0 509.5 H32" stroke="#ababab" stroke-width="1"/><path d="M32 534.5 H1920" stroke="#dadada" stroke-width="1"/><path d="M0 534.5 H32" stroke="#ababab" stroke-width="1"/><path d="M32 560.5 H1920" stroke="#dadada" stroke-width="1"/><path d="M0 560.5 H32" stroke="#ababab" stroke-width="1"/><path d="M32 585.5 H1920" stroke="#dadada" stroke-width="1"/><path d="M0 585.5 H32" stroke="#ababab" stroke-width="1"/><path d="M32 611.5 H1920" stroke="#dadada" stroke-width="1"/><path d="M0 611.5 H32" stroke="#ababab" stroke-width="1"/><path d="M32 636.5 H1920" stroke="#dadada" stroke-width="1"/><path d="M0 636.5 H32" stroke="#ababab" stroke-width="1"/><path d="M32 661.5 H1920" stroke="#dadada" stroke-width="1"/><path d="M0 661.5 H32" stroke="#ababab" stroke-width="1"/><path d="M32 687.5 H1920" stroke="#dadada" stroke-width="1"/><path d="M0 687.5 H32" stroke="#ababab" stroke-width="1"/><path d="M32 712.5 H1920" stroke="#dadada" stroke-width="1"/><path d="M0 712.5 H32" stroke="#ababab" stroke-width="1"/><path d="M32 738.5 H1920" stroke="#dadada" stroke-width="1"/><path d="M0 738.5 H32" stroke="#ababab" stroke-width="1"/><path d="M32 763.5 H1920" stroke="#dadada" stroke-width="1"/><path d="M0 763.5 H32" stroke="#ababab" stroke-width="1"/><path d="M32 788.5 H1920" stroke="#dadada" stroke-width="1"/><path d="M0 788.5 H32" stroke="#ababab" stroke-width="1"/><path d="M32 814.5 H1920" stroke="#dadada" stroke-width="1"/><path d="M0 814.5 H32" stroke="#ababab" stroke-width="1"/><path d="M32 839.5 H1920" stroke="#dadada" stroke-width="1"/><path d="M0 839.5 H32" stroke="#ababab" stroke-width="1"/><path d="M32 865.5 H1920" stroke="#dadada" stroke-width="1"/><path d="M0 865.5 H32" stroke="#ababab" stroke-width="1"/><path d="M32 890.5 H1920" stroke="#dadada" stroke-width="1"/><path d="M0 890.5 H32" stroke="#ababab" stroke-width="1"/><path d="M32 915.5 H1920" stroke="#dadada" stroke-width="1"/><path d="M0 915.5 H32" stroke="#ababab" stroke-width="1"/><path d="M32 941.5 H1920" stroke="#dadada" stroke-width="1"/><path d="M0 941.5 H32" stroke="#ababab" stroke-width="1"/><path d="M32 966.5 H1920" stroke="#dadada" stroke-width="1"/><path d="M0 966.5 H32" stroke="#ababab" stroke-width="1"/><path d="M32 992.5 H1920" stroke="#dadada" stroke-width="1"/><path d="M0 992.5 H32" stroke="#ababab" stroke-width="1"/><path d="M32 1017.5 H1920" stroke="#dadada" stroke-width="1"/><path d="M0 1017.5 H32" stroke="#ababab" stroke-width="1"/><path d="M32 1042.5 H1920" stroke="#dadada" stroke-width="1"/><path d="M0 1042.5 H32" stroke="#ababab" stroke-width="1"/><path d="M251.5 356 V1021" stroke="#dadada" stroke-width="1"/><path d="M251.5 333 V356" stroke="#bcbcbc" stroke-width="1"/><path d="M470.5 356 V1021" stroke="#dadada" stroke-width="1"/><path d="M470.5 333 V356" stroke="#bcbcbc" stroke-width="1"/><path d="M690.5 356 V1021" stroke="#dadada" stroke-width="1"/><path d="M690.5 333 V356" stroke="#bcbcbc" stroke-width="1"/><path d="M909.5 356 V1021" stroke="#dadada" stroke-width="1"/><path d="M909.5 333 V356" stroke="#bcbcbc" stroke-width="1"/><path d="M1129.5 356 V1021" stroke="#dadada" stroke-width="1"/><path d="M1129.5 333 V356" stroke="#bcbcbc" stroke-width="1"/><path d="M1348.5 356 V1021" stroke="#dadada" stroke-width="1"/><path d="M1348.5 333 V356" stroke="#bcbcbc" stroke-width="1"/><path d="M1567.5 356 V1021" stroke="#dadada" stroke-width="1"/><path d="M1567.5 333 V356" stroke="#bcbcbc" stroke-width="1"/><path d="M1786.5 356 V1021" stroke="#dadada" stroke-width="1"/><path d="M1786.5 333 V356" stroke="#bcbcbc" stroke-width="1"/></svg>
<div style="position:absolute;left:0px;top:356px;width:1920px;height:1px;background:#9d9d9d"></div>
<div style="position:absolute;left:32px;top:331px;width:1px;height:690px;background:#9d9d9d"></div>
<div class="t " style="left:142.0px;transform:translateX(-50%);top:336.49px;font-size:17.5px;color:#217346;font-weight:400;">A</div>
<div class="t " style="left:361.0px;transform:translateX(-50%);top:336.49px;font-size:17.5px;color:#262626;font-weight:400;">B</div>
<div class="t " style="left:580.5px;transform:translateX(-50%);top:336.49px;font-size:17.5px;color:#262626;font-weight:400;">C</div>
<div class="t " style="left:800.0px;transform:translateX(-50%);top:336.49px;font-size:17.5px;color:#262626;font-weight:400;">D</div>
<div class="t " style="left:1019.5px;transform:translateX(-50%);top:336.49px;font-size:17.5px;color:#262626;font-weight:400;">E</div>
<div class="t " style="left:1239.0px;transform:translateX(-50%);top:336.49px;font-size:17.5px;color:#262626;font-weight:400;">F</div>
<div class="t " style="left:1458.0px;transform:translateX(-50%);top:336.49px;font-size:17.5px;color:#262626;font-weight:400;">G</div>
<div class="t " style="left:1677.0px;transform:translateX(-50%);top:336.49px;font-size:17.5px;color:#262626;font-weight:400;">H</div>
<div class="t " style="left:1896.5px;transform:translateX(-50%);top:336.49px;font-size:17.5px;color:#262626;font-weight:400;">I</div>
<div class="t " style="left:14.9px;transform:translateX(-50%);top:360.11px;font-size:18.3px;color:#217346;font-weight:400;">1</div>
<div class="t " style="left:14.9px;transform:translateX(-50%);top:386.11px;font-size:18.3px;color:#262626;font-weight:400;">2</div>
<div class="t " style="left:14.9px;transform:translateX(-50%);top:411.51px;font-size:18.3px;color:#262626;font-weight:400;">3</div>
<div class="t " style="left:14.9px;transform:translateX(-50%);top:436.91px;font-size:18.3px;color:#262626;font-weight:400;">4</div>
<div class="t " style="left:14.9px;transform:translateX(-50%);top:462.31px;font-size:18.3px;color:#262626;font-weight:400;">5</div>
<div class="t " style="left:14.9px;transform:translateX(-50%);top:487.71px;font-size:18.3px;color:#262626;font-weight:400;">6</div>
<div class="t " style="left:14.9px;transform:translateX(-50%);top:513.11px;font-size:18.3px;color:#262626;font-weight:400;">7</div>
<div class="t " style="left:14.9px;transform:translateX(-50%);top:538.51px;font-size:18.3px;color:#262626;font-weight:400;">8</div>
<div class="t " style="left:14.9px;transform:translateX(-50%);top:563.91px;font-size:18.3px;color:#262626;font-weight:400;">9</div>
<div class="t " style="left:14.9px;transform:translateX(-50%);top:589.31px;font-size:18.3px;color:#262626;font-weight:400;">10</div>
<div class="t " style="left:14.9px;transform:translateX(-50%);top:614.71px;font-size:18.3px;color:#262626;font-weight:400;">11</div>
<div class="t " style="left:14.9px;transform:translateX(-50%);top:640.11px;font-size:18.3px;color:#262626;font-weight:400;">12</div>
<div class="t " style="left:14.9px;transform:translateX(-50%);top:665.51px;font-size:18.3px;color:#262626;font-weight:400;">13</div>
<div class="t " style="left:14.9px;transform:translateX(-50%);top:690.91px;font-size:18.3px;color:#262626;font-weight:400;">14</div>
<div class="t " style="left:14.9px;transform:translateX(-50%);top:716.31px;font-size:18.3px;color:#262626;font-weight:400;">15</div>
<div class="t " style="left:14.9px;transform:translateX(-50%);top:741.71px;font-size:18.3px;color:#262626;font-weight:400;">16</div>
<div class="t " style="left:14.9px;transform:translateX(-50%);top:767.11px;font-size:18.3px;color:#262626;font-weight:400;">17</div>
<div class="t " style="left:14.9px;transform:translateX(-50%);top:792.51px;font-size:18.3px;color:#262626;font-weight:400;">18</div>
<div class="t " style="left:14.9px;transform:translateX(-50%);top:817.91px;font-size:18.3px;color:#262626;font-weight:400;">19</div>
<div class="t " style="left:14.9px;transform:translateX(-50%);top:843.31px;font-size:18.3px;color:#262626;font-weight:400;">20</div>
<div class="t " style="left:14.9px;transform:translateX(-50%);top:868.71px;font-size:18.3px;color:#262626;font-weight:400;">21</div>
<div class="t " style="left:14.9px;transform:translateX(-50%);top:894.11px;font-size:18.3px;color:#262626;font-weight:400;">22</div>
<div class="t " style="left:14.9px;transform:translateX(-50%);top:919.51px;font-size:18.3px;color:#262626;font-weight:400;">23</div>
<div class="t " style="left:14.9px;transform:translateX(-50%);top:944.91px;font-size:18.3px;color:#262626;font-weight:400;">24</div>
<div class="t " style="left:14.9px;transform:translateX(-50%);top:970.31px;font-size:18.3px;color:#262626;font-weight:400;">25</div>
<div class="t " style="left:14.9px;transform:translateX(-50%);top:995.71px;font-size:18.3px;color:#262626;font-weight:400;">26</div>
<div style="position:absolute;left:33px;top:356.00px;width:218px;height:25.40px;overflow:hidden"><div class="t" style="left:109.5px;top:5.92px;transform:translateX(-50%);font-size:16.4px;font-weight:700;color:#000;">Frequency</div></div>
<div style="position:absolute;left:252px;top:356.00px;width:218px;height:25.40px;overflow:hidden"><div class="t" style="left:109.5px;top:5.92px;transform:translateX(-50%);font-size:16.4px;font-weight:700;color:#000;letter-spacing:0.22px;">Position</div></div>
<div style="position:absolute;left:471px;top:356.00px;width:219px;height:25.40px;overflow:hidden"><div class="t" style="left:110.0px;top:5.92px;transform:translateX(-50%);font-size:16.4px;font-weight:700;color:#000;">Valid Time</div></div>
<div style="position:absolute;left:691px;top:356.00px;width:218px;height:25.40px;overflow:hidden"><div class="t" style="left:109.5px;top:5.92px;transform:translateX(-50%);font-size:16.4px;font-weight:700;color:#000;">Major Axis</div></div>
<div style="position:absolute;left:910px;top:356.00px;width:219px;height:25.40px;overflow:hidden"><div class="t" style="left:110.0px;top:5.92px;transform:translateX(-50%);font-size:16.4px;font-weight:700;color:#000;">Minor Axis</div></div>
<div style="position:absolute;left:1130px;top:356.00px;width:218px;height:25.40px;overflow:hidden"><div class="t" style="left:109.5px;top:5.92px;transform:translateX(-50%);font-size:16.4px;font-weight:700;color:#000;">Name</div></div>
<div style="position:absolute;left:1349px;top:356.00px;width:218px;height:25.40px;overflow:hidden"><div class="t" style="left:109.5px;top:5.92px;transform:translateX(-50%);font-size:16.4px;font-weight:700;color:#000;">Signal Number</div></div>
<div style="position:absolute;left:33px;top:382.00px;width:218px;height:25.40px;overflow:hidden"><div class="t" style="left:109.5px;top:5.21px;transform:translateX(-50%);font-size:17px;font-weight:400;color:#000;">482.5377</div></div>
<div style="position:absolute;left:252px;top:382.00px;width:218px;height:25.40px;overflow:hidden"><div class="t" style="left:109.5px;top:5.21px;transform:translateX(-50%);font-size:17px;font-weight:400;color:#000;letter-spacing:0.22px;">24:07:12:N 106:48:36:W</div></div>
<div style="position:absolute;left:471px;top:382.00px;width:219px;height:25.40px;overflow:hidden"><div class="t" style="left:1px;top:5.21px;font-size:17px;letter-spacing:0.42px;color:#000">08/09/2022  16:29:39.5 UTC</div></div>
<div style="position:absolute;left:691px;top:382.00px;width:218px;height:25.40px;overflow:hidden"><div class="t" style="left:109.5px;top:5.21px;transform:translateX(-50%);font-size:17px;font-weight:400;color:#000;">61.85</div></div>
<div style="position:absolute;left:910px;top:382.00px;width:219px;height:25.40px;overflow:hidden"><div class="t" style="left:110.0px;top:5.21px;transform:translateX(-50%);font-size:17px;font-weight:400;color:#000;">4.35</div></div>
<div style="position:absolute;left:1130px;top:382.00px;width:218px;height:25.40px;overflow:hidden"><div class="t" style="left:109.5px;top:5.21px;transform:translateX(-50%);font-size:17px;font-weight:400;color:#000;">-</div></div>
<div style="position:absolute;left:1349px;top:382.00px;width:218px;height:25.40px;overflow:hidden"><div class="t" style="left:109.5px;top:5.21px;transform:translateX(-50%);font-size:17px;font-weight:400;color:#000;">1543</div></div>
<div style="position:absolute;left:33px;top:407.40px;width:218px;height:25.40px;overflow:hidden"><div class="t" style="left:109.5px;top:5.21px;transform:translateX(-50%);font-size:17px;font-weight:400;color:#000;">465.9335</div></div>
<div style="position:absolute;left:252px;top:407.40px;width:218px;height:25.40px;overflow:hidden"><div class="t" style="left:109.5px;top:5.21px;transform:translateX(-50%);font-size:17px;font-weight:400;color:#000;letter-spacing:0.22px;">25:01:28:N 106:36:51:W</div></div>
<div style="position:absolute;left:471px;top:407.40px;width:219px;height:25.40px;overflow:hidden"><div class="t" style="left:1px;top:5.21px;font-size:17px;letter-spacing:0.42px;color:#000">08/09/2022  15:52:36.0 UTC</div></div>
<div style="position:absolute;left:691px;top:407.40px;width:218px;height:25.40px;overflow:hidden"><div class="t" style="left:109.5px;top:5.21px;transform:translateX(-50%);font-size:17px;font-weight:400;color:#000;">19.19</div></div>
<div style="position:absolute;left:910px;top:407.40px;width:219px;height:25.40px;overflow:hidden"><div class="t" style="left:110.0px;top:5.21px;transform:translateX(-50%);font-size:17px;font-weight:400;color:#000;">2.41</div></div>
<div style="position:absolute;left:1130px;top:407.40px;width:218px;height:25.40px;overflow:hidden"><div class="t" style="left:109.5px;top:5.21px;transform:translateX(-50%);font-size:17px;font-weight:400;color:#000;">1383</div></div>
<div style="position:absolute;left:1349px;top:407.40px;width:218px;height:25.40px;overflow:hidden"><div class="t" style="left:109.5px;top:5.21px;transform:translateX(-50%);font-size:17px;font-weight:400;color:#000;">5082</div></div>
<div style="position:absolute;left:33px;top:432.80px;width:218px;height:25.40px;overflow:hidden"><div class="t" style="left:109.5px;top:5.21px;transform:translateX(-50%);font-size:17px;font-weight:400;color:#000;">445.686</div></div>
<div style="position:absolute;left:252px;top:432.80px;width:218px;height:25.40px;overflow:hidden"><div class="t" style="left:109.5px;top:5.21px;transform:translateX(-50%);font-size:17px;font-weight:400;color:#000;letter-spacing:0.22px;">24:47:05:N 107:25:28:W</div></div>
<div style="position:absolute;left:471px;top:432.80px;width:219px;height:25.40px;overflow:hidden"><div class="t" style="left:1px;top:5.21px;font-size:17px;letter-spacing:0.42px;color:#000">08/09/2022  15:56:58.2 UTC</div></div>
<div style="position:absolute;left:691px;top:432.80px;width:218px;height:25.40px;overflow:hidden"><div class="t" style="left:109.5px;top:5.21px;transform:translateX(-50%);font-size:17px;font-weight:400;color:#000;">2.73</div></div>
<div style="position:absolute;left:910px;top:432.80px;width:219px;height:25.40px;overflow:hidden"><div class="t" style="left:110.0px;top:5.21px;transform:translateX(-50%);font-size:17px;font-weight:400;color:#000;">0.56</div></div>
<div style="position:absolute;left:1130px;top:432.80px;width:218px;height:25.40px;overflow:hidden"><div class="t" style="left:109.5px;top:5.21px;transform:translateX(-50%);font-size:17px;font-weight:400;color:#000;">-</div></div>
<div style="position:absolute;left:1349px;top:432.80px;width:218px;height:25.40px;overflow:hidden"><div class="t" style="left:109.5px;top:5.21px;transform:translateX(-50%);font-size:17px;font-weight:400;color:#000;">2531</div></div>
<div style="position:absolute;left:33px;top:458.20px;width:218px;height:25.40px;overflow:hidden"><div class="t" style="left:109.5px;top:5.21px;transform:translateX(-50%);font-size:17px;font-weight:400;color:#000;">445.3844</div></div>
<div style="position:absolute;left:252px;top:458.20px;width:218px;height:25.40px;overflow:hidden"><div class="t" style="left:109.5px;top:5.21px;transform:translateX(-50%);font-size:17px;font-weight:400;color:#000;letter-spacing:0.22px;">25:19:55:N 107:38:06:W</div></div>
<div style="position:absolute;left:471px;top:458.20px;width:219px;height:25.40px;overflow:hidden"><div class="t" style="left:1px;top:5.21px;font-size:17px;letter-spacing:0.42px;color:#000">08/09/2022  15:45:34.4 UTC</div></div>
<div style="position:absolute;left:691px;top:458.20px;width:218px;height:25.40px;overflow:hidden"><div class="t" style="left:109.5px;top:5.21px;transform:translateX(-50%);font-size:17px;font-weight:400;color:#000;">4.82</div></div>
<div style="position:absolute;left:910px;top:458.20px;width:219px;height:25.40px;overflow:hidden"><div class="t" style="left:110.0px;top:5.21px;transform:translateX(-50%);font-size:17px;font-weight:400;color:#000;">0.6</div></div>
<div style="position:absolute;left:1130px;top:458.20px;width:218px;height:25.40px;overflow:hidden"><div class="t" style="left:109.5px;top:5.21px;transform:translateX(-50%);font-size:17px;font-weight:400;color:#000;">-</div></div>
<div style="position:absolute;left:1349px;top:458.20px;width:218px;height:25.40px;overflow:hidden"><div class="t" style="left:109.5px;top:5.21px;transform:translateX(-50%);font-size:17px;font-weight:400;color:#000;">2782</div></div>
<div style="position:absolute;left:33px;top:483.60px;width:218px;height:25.40px;overflow:hidden"><div class="t" style="left:109.5px;top:5.21px;transform:translateX(-50%);font-size:17px;font-weight:400;color:#000;">440.7819</div></div>
<div style="position:absolute;left:252px;top:483.60px;width:218px;height:25.40px;overflow:hidden"><div class="t" style="left:109.5px;top:5.21px;transform:translateX(-50%);font-size:17px;font-weight:400;color:#000;letter-spacing:0.22px;">25:49:09:N 108:59:39:W</div></div>
<div style="position:absolute;left:471px;top:483.60px;width:219px;height:25.40px;overflow:hidden"><div class="t" style="left:1px;top:5.21px;font-size:17px;letter-spacing:0.42px;color:#000">08/09/2022  15:45:55.7 UTC</div></div>
<div style="position:absolute;left:691px;top:483.60px;width:218px;height:25.40px;overflow:hidden"><div class="t" style="left:109.5px;top:5.21px;transform:translateX(-50%);font-size:17px;font-weight:400;color:#000;">57.23</div></div>
<div style="position:absolute;left:910px;top:483.60px;width:219px;height:25.40px;overflow:hidden"><div class="t" style="left:110.0px;top:5.21px;transform:translateX(-50%);font-size:17px;font-weight:400;color:#000;">3.16</div></div>
<div style="position:absolute;left:1130px;top:483.60px;width:218px;height:25.40px;overflow:hidden"><div class="t" style="left:109.5px;top:5.21px;transform:translateX(-50%);font-size:17px;font-weight:400;color:#000;">-</div></div>
<div style="position:absolute;left:1349px;top:483.60px;width:218px;height:25.40px;overflow:hidden"><div class="t" style="left:109.5px;top:5.21px;transform:translateX(-50%);font-size:17px;font-weight:400;color:#000;">175</div></div>
<div style="position:absolute;left:33px;top:509.00px;width:218px;height:25.40px;overflow:hidden"><div class="t" style="left:109.5px;top:5.21px;transform:translateX(-50%);font-size:17px;font-weight:400;color:#000;">145.3505</div></div>
<div style="position:absolute;left:252px;top:509.00px;width:218px;height:25.40px;overflow:hidden"><div class="t" style="left:109.5px;top:5.21px;transform:translateX(-50%);font-size:17px;font-weight:400;color:#000;letter-spacing:0.22px;">24:48:23:N 107:09:27:W</div></div>
<div style="position:absolute;left:471px;top:509.00px;width:219px;height:25.40px;overflow:hidden"><div class="t" style="left:1px;top:5.21px;font-size:17px;letter-spacing:0.42px;color:#000">08/09/2022  15:58:03.4 UTC</div></div>
<div style="position:absolute;left:691px;top:509.00px;width:218px;height:25.40px;overflow:hidden"><div class="t" style="left:109.5px;top:5.21px;transform:translateX(-50%);font-size:17px;font-weight:400;color:#000;">22.4</div></div>
<div style="position:absolute;left:910px;top:509.00px;width:219px;height:25.40px;overflow:hidden"><div class="t" style="left:110.0px;top:5.21px;transform:translateX(-50%);font-size:17px;font-weight:400;color:#000;">5.42</div></div>
<div style="position:absolute;left:1130px;top:509.00px;width:218px;height:25.40px;overflow:hidden"><div class="t" style="left:109.5px;top:5.21px;transform:translateX(-50%);font-size:17px;font-weight:400;color:#000;">172</div></div>
<div style="position:absolute;left:1349px;top:509.00px;width:218px;height:25.40px;overflow:hidden"><div class="t" style="left:109.5px;top:5.21px;transform:translateX(-50%);font-size:17px;font-weight:400;color:#000;">3338</div></div>
<div style="position:absolute;left:33px;top:534.40px;width:218px;height:25.40px;overflow:hidden"><div class="t" style="left:109.5px;top:5.21px;transform:translateX(-50%);font-size:17px;font-weight:400;color:#000;">456.375</div></div>
<div style="position:absolute;left:252px;top:534.40px;width:218px;height:25.40px;overflow:hidden"><div class="t" style="left:109.5px;top:5.21px;transform:translateX(-50%);font-size:17px;font-weight:400;color:#000;letter-spacing:0.22px;">25:26:13:N 106:32:26:W</div></div>
<div style="position:absolute;left:471px;top:534.40px;width:219px;height:25.40px;overflow:hidden"><div class="t" style="left:1px;top:5.21px;font-size:17px;letter-spacing:0.42px;color:#000">08/09/2022  16:14:50.0 UTC</div></div>
<div style="position:absolute;left:691px;top:534.40px;width:218px;height:25.40px;overflow:hidden"><div class="t" style="left:109.5px;top:5.21px;transform:translateX(-50%);font-size:17px;font-weight:400;color:#000;">60.63</div></div>
<div style="position:absolute;left:910px;top:534.40px;width:219px;height:25.40px;overflow:hidden"><div class="t" style="left:110.0px;top:5.21px;transform:translateX(-50%);font-size:17px;font-weight:400;color:#000;">2.7</div></div>
<div style="position:absolute;left:1130px;top:534.40px;width:218px;height:25.40px;overflow:hidden"><div class="t" style="left:109.5px;top:5.21px;transform:translateX(-50%);font-size:17px;font-weight:400;color:#000;">-</div></div>
<div style="position:absolute;left:1349px;top:534.40px;width:218px;height:25.40px;overflow:hidden"><div class="t" style="left:109.5px;top:5.21px;transform:translateX(-50%);font-size:17px;font-weight:400;color:#000;">1093</div></div>
<div style="position:absolute;left:33px;top:559.80px;width:218px;height:25.40px;overflow:hidden"><div class="t" style="left:109.5px;top:5.21px;transform:translateX(-50%);font-size:17px;font-weight:400;color:#000;">434.4116</div></div>
<div style="position:absolute;left:252px;top:559.80px;width:218px;height:25.40px;overflow:hidden"><div class="t" style="left:109.5px;top:5.21px;transform:translateX(-50%);font-size:17px;font-weight:400;color:#000;letter-spacing:0.22px;">24:51:32:N 107:20:00:W</div></div>
<div style="position:absolute;left:471px;top:559.80px;width:219px;height:25.40px;overflow:hidden"><div class="t" style="left:1px;top:5.21px;font-size:17px;letter-spacing:0.42px;color:#000">08/09/2022  15:50:33.4 UTC</div></div>
<div style="position:absolute;left:691px;top:559.80px;width:218px;height:25.40px;overflow:hidden"><div class="t" style="left:109.5px;top:5.21px;transform:translateX(-50%);font-size:17px;font-weight:400;color:#000;">8.92</div></div>
<div style="position:absolute;left:910px;top:559.80px;width:219px;height:25.40px;overflow:hidden"><div class="t" style="left:110.0px;top:5.21px;transform:translateX(-50%);font-size:17px;font-weight:400;color:#000;">0.8</div></div>
<div style="position:absolute;left:1130px;top:559.80px;width:218px;height:25.40px;overflow:hidden"><div class="t" style="left:109.5px;top:5.21px;transform:translateX(-50%);font-size:17px;font-weight:400;color:#000;">35</div></div>
<div style="position:absolute;left:1349px;top:559.80px;width:218px;height:25.40px;overflow:hidden"><div class="t" style="left:109.5px;top:5.21px;transform:translateX(-50%);font-size:17px;font-weight:400;color:#000;">2874</div></div>
<div style="position:absolute;left:33px;top:585.20px;width:218px;height:25.40px;overflow:hidden"><div class="t" style="left:109.5px;top:5.21px;transform:translateX(-50%);font-size:17px;font-weight:400;color:#000;">490.4123</div></div>
<div style="position:absolute;left:252px;top:585.20px;width:218px;height:25.40px;overflow:hidden"><div class="t" style="left:109.5px;top:5.21px;transform:translateX(-50%);font-size:17px;font-weight:400;color:#000;letter-spacing:0.22px;">24:32:55:N 107:04:19:W</div></div>
<div style="position:absolute;left:471px;top:585.20px;width:219px;height:25.40px;overflow:hidden"><div class="t" style="left:1px;top:5.21px;font-size:17px;letter-spacing:0.42px;color:#000">08/09/2022  15:52:43.8 UTC</div></div>
<div style="position:absolute;left:691px;top:585.20px;width:218px;height:25.40px;overflow:hidden"><div class="t" style="left:109.5px;top:5.21px;transform:translateX(-50%);font-size:17px;font-weight:400;color:#000;">28.32</div></div>
<div style="position:absolute;left:910px;top:585.20px;width:219px;height:25.40px;overflow:hidden"><div class="t" style="left:110.0px;top:5.21px;transform:translateX(-50%);font-size:17px;font-weight:400;color:#000;">1.44</div></div>
<div style="position:absolute;left:1130px;top:585.20px;width:218px;height:25.40px;overflow:hidden"><div class="t" style="left:109.5px;top:5.21px;transform:translateX(-50%);font-size:17px;font-weight:400;color:#000;">-</div></div>
<div style="position:absolute;left:1349px;top:585.20px;width:218px;height:25.40px;overflow:hidden"><div class="t" style="left:109.5px;top:5.21px;transform:translateX(-50%);font-size:17px;font-weight:400;color:#000;">237</div></div>
<div style="position:absolute;left:33px;top:610.60px;width:218px;height:25.40px;overflow:hidden"><div class="t" style="left:109.5px;top:5.21px;transform:translateX(-50%);font-size:17px;font-weight:400;color:#000;">486.425</div></div>
<div style="position:absolute;left:252px;top:610.60px;width:218px;height:25.40px;overflow:hidden"><div class="t" style="left:109.5px;top:5.21px;transform:translateX(-50%);font-size:17px;font-weight:400;color:#000;letter-spacing:0.22px;">24:56:51:N 106:42:30:W</div></div>
<div style="position:absolute;left:471px;top:610.60px;width:219px;height:25.40px;overflow:hidden"><div class="t" style="left:1px;top:5.21px;font-size:17px;letter-spacing:0.42px;color:#000">08/09/2022  16:20:38.0 UTC</div></div>
<div style="position:absolute;left:691px;top:610.60px;width:218px;height:25.40px;overflow:hidden"><div class="t" style="left:109.5px;top:5.21px;transform:translateX(-50%);font-size:17px;font-weight:400;color:#000;">22.92</div></div>
<div style="position:absolute;left:910px;top:610.60px;width:219px;height:25.40px;overflow:hidden"><div class="t" style="left:110.0px;top:5.21px;transform:translateX(-50%);font-size:17px;font-weight:400;color:#000;">1.88</div></div>
<div style="position:absolute;left:1130px;top:610.60px;width:218px;height:25.40px;overflow:hidden"><div class="t" style="left:109.5px;top:5.21px;transform:translateX(-50%);font-size:17px;font-weight:400;color:#000;">-</div></div>
<div style="position:absolute;left:1349px;top:610.60px;width:218px;height:25.40px;overflow:hidden"><div class="t" style="left:109.5px;top:5.21px;transform:translateX(-50%);font-size:17px;font-weight:400;color:#000;">2581</div></div>
<div style="position:absolute;left:33px;top:636.00px;width:218px;height:25.40px;overflow:hidden"><div class="t" style="left:109.5px;top:5.21px;transform:translateX(-50%);font-size:17px;font-weight:400;color:#000;">448.3875</div></div>
<div style="position:absolute;left:252px;top:636.00px;width:218px;height:25.40px;overflow:hidden"><div class="t" style="left:109.5px;top:5.21px;transform:translateX(-50%);font-size:17px;font-weight:400;color:#000;letter-spacing:0.22px;">25:07:33:N 107:31:31:W</div></div>
<div style="position:absolute;left:471px;top:636.00px;width:219px;height:25.40px;overflow:hidden"><div class="t" style="left:1px;top:5.21px;font-size:17px;letter-spacing:0.42px;color:#000">08/09/2022  15:50:46.0 UTC</div></div>
<div style="position:absolute;left:691px;top:636.00px;width:218px;height:25.40px;overflow:hidden"><div class="t" style="left:109.5px;top:5.21px;transform:translateX(-50%);font-size:17px;font-weight:400;color:#000;">26.69</div></div>
<div style="position:absolute;left:910px;top:636.00px;width:219px;height:25.40px;overflow:hidden"><div class="t" style="left:110.0px;top:5.21px;transform:translateX(-50%);font-size:17px;font-weight:400;color:#000;">0.64</div></div>
<div style="position:absolute;left:1130px;top:636.00px;width:218px;height:25.40px;overflow:hidden"><div class="t" style="left:109.5px;top:5.21px;transform:translateX(-50%);font-size:17px;font-weight:400;color:#000;">112</div></div>
<div style="position:absolute;left:1349px;top:636.00px;width:218px;height:25.40px;overflow:hidden"><div class="t" style="left:109.5px;top:5.21px;transform:translateX(-50%);font-size:17px;font-weight:400;color:#000;">2510</div></div>
<div style="position:absolute;left:33px;top:661.40px;width:218px;height:25.40px;overflow:hidden"><div class="t" style="left:109.5px;top:5.21px;transform:translateX(-50%);font-size:17px;font-weight:400;color:#000;">482.0312</div></div>
<div style="position:absolute;left:252px;top:661.40px;width:218px;height:25.40px;overflow:hidden"><div class="t" style="left:109.5px;top:5.21px;transform:translateX(-50%);font-size:17px;font-weight:400;color:#000;letter-spacing:0.22px;">24:58:48:N 107:34:51:W</div></div>
<div style="position:absolute;left:471px;top:661.40px;width:219px;height:25.40px;overflow:hidden"><div class="t" style="left:1px;top:5.21px;font-size:17px;letter-spacing:0.42px;color:#000">08/09/2022  15:57:51.4 UTC</div></div>
<div style="position:absolute;left:691px;top:661.40px;width:218px;height:25.40px;overflow:hidden"><div class="t" style="left:109.5px;top:5.21px;transform:translateX(-50%);font-size:17px;font-weight:400;color:#000;">0.55</div></div>
<div style="position:absolute;left:910px;top:661.40px;width:219px;height:25.40px;overflow:hidden"><div class="t" style="left:110.0px;top:5.21px;transform:translateX(-50%);font-size:17px;font-weight:400;color:#000;">0.07</div></div>
<div style="position:absolute;left:1130px;top:661.40px;width:218px;height:25.40px;overflow:hidden"><div class="t" style="left:109.5px;top:5.21px;transform:translateX(-50%);font-size:17px;font-weight:400;color:#000;">-</div></div>
<div style="position:absolute;left:1349px;top:661.40px;width:218px;height:25.40px;overflow:hidden"><div class="t" style="left:109.5px;top:5.21px;transform:translateX(-50%);font-size:17px;font-weight:400;color:#000;">1341</div></div>
<div style="position:absolute;left:33px;top:686.80px;width:218px;height:25.40px;overflow:hidden"><div class="t" style="left:109.5px;top:5.21px;transform:translateX(-50%);font-size:17px;font-weight:400;color:#000;">469.025</div></div>
<div style="position:absolute;left:252px;top:686.80px;width:218px;height:25.40px;overflow:hidden"><div class="t" style="left:109.5px;top:5.21px;transform:translateX(-50%);font-size:17px;font-weight:400;color:#000;letter-spacing:0.22px;">25:46:22:N 107:28:03:W</div></div>
<div style="position:absolute;left:471px;top:686.80px;width:219px;height:25.40px;overflow:hidden"><div class="t" style="left:1px;top:5.21px;font-size:17px;letter-spacing:0.42px;color:#000">08/09/2022  16:22:03.9 UTC</div></div>
<div style="position:absolute;left:691px;top:686.80px;width:218px;height:25.40px;overflow:hidden"><div class="t" style="left:109.5px;top:5.21px;transform:translateX(-50%);font-size:17px;font-weight:400;color:#000;">3.31</div></div>
<div style="position:absolute;left:910px;top:686.80px;width:219px;height:25.40px;overflow:hidden"><div class="t" style="left:110.0px;top:5.21px;transform:translateX(-50%);font-size:17px;font-weight:400;color:#000;">0.39</div></div>
<div style="position:absolute;left:1130px;top:686.80px;width:218px;height:25.40px;overflow:hidden"><div class="t" style="left:109.5px;top:5.21px;transform:translateX(-50%);font-size:17px;font-weight:400;color:#000;">-</div></div>
<div style="position:absolute;left:1349px;top:686.80px;width:218px;height:25.40px;overflow:hidden"><div class="t" style="left:109.5px;top:5.21px;transform:translateX(-50%);font-size:17px;font-weight:400;color:#000;">227</div></div>
<div style="position:absolute;left:33px;top:712.20px;width:218px;height:25.40px;overflow:hidden"><div class="t" style="left:109.5px;top:5.21px;transform:translateX(-50%);font-size:17px;font-weight:400;color:#000;">157.863</div></div>
<div style="position:absolute;left:252px;top:712.20px;width:218px;height:25.40px;overflow:hidden"><div class="t" style="left:109.5px;top:5.21px;transform:translateX(-50%);font-size:17px;font-weight:400;color:#000;letter-spacing:0.22px;">24:53:39:N 107:00:54:W</div></div>
<div style="position:absolute;left:471px;top:712.20px;width:219px;height:25.40px;overflow:hidden"><div class="t" style="left:1px;top:5.21px;font-size:17px;letter-spacing:0.42px;color:#000">08/09/2022  15:55:48.5 UTC</div></div>
<div style="position:absolute;left:691px;top:712.20px;width:218px;height:25.40px;overflow:hidden"><div class="t" style="left:109.5px;top:5.21px;transform:translateX(-50%);font-size:17px;font-weight:400;color:#000;">13.48</div></div>
<div style="position:absolute;left:910px;top:712.20px;width:219px;height:25.40px;overflow:hidden"><div class="t" style="left:110.0px;top:5.21px;transform:translateX(-50%);font-size:17px;font-weight:400;color:#000;">1.88</div></div>
<div style="position:absolute;left:1130px;top:712.20px;width:218px;height:25.40px;overflow:hidden"><div class="t" style="left:109.5px;top:5.21px;transform:translateX(-50%);font-size:17px;font-weight:400;color:#000;">-</div></div>
<div style="position:absolute;left:1349px;top:712.20px;width:218px;height:25.40px;overflow:hidden"><div class="t" style="left:109.5px;top:5.21px;transform:translateX(-50%);font-size:17px;font-weight:400;color:#000;">678</div></div>
<div style="position:absolute;left:33px;top:737.60px;width:218px;height:25.40px;overflow:hidden"><div class="t" style="left:109.5px;top:5.21px;transform:translateX(-50%);font-size:17px;font-weight:400;color:#000;">469.01</div></div>
<div style="position:absolute;left:252px;top:737.60px;width:218px;height:25.40px;overflow:hidden"><div class="t" style="left:109.5px;top:5.21px;transform:translateX(-50%);font-size:17px;font-weight:400;color:#000;letter-spacing:0.22px;">25:03:13:N 107:22:48:W</div></div>
<div style="position:absolute;left:471px;top:737.60px;width:219px;height:25.40px;overflow:hidden"><div class="t" style="left:1px;top:5.21px;font-size:17px;letter-spacing:0.42px;color:#000">08/09/2022  15:51:15.4 UTC</div></div>
<div style="position:absolute;left:691px;top:737.60px;width:218px;height:25.40px;overflow:hidden"><div class="t" style="left:109.5px;top:5.21px;transform:translateX(-50%);font-size:17px;font-weight:400;color:#000;">13.78</div></div>
<div style="position:absolute;left:910px;top:737.60px;width:219px;height:25.40px;overflow:hidden"><div class="t" style="left:110.0px;top:5.21px;transform:translateX(-50%);font-size:17px;font-weight:400;color:#000;">0.09</div></div>
<div style="position:absolute;left:1130px;top:737.60px;width:218px;height:25.40px;overflow:hidden"><div class="t" style="left:109.5px;top:5.21px;transform:translateX(-50%);font-size:17px;font-weight:400;color:#000;">326</div></div>
<div style="position:absolute;left:1349px;top:737.60px;width:218px;height:25.40px;overflow:hidden"><div class="t" style="left:109.5px;top:5.21px;transform:translateX(-50%);font-size:17px;font-weight:400;color:#000;">7067</div></div>
<div style="position:absolute;left:33px;top:763.00px;width:218px;height:25.40px;overflow:hidden"><div class="t" style="left:109.5px;top:5.21px;transform:translateX(-50%);font-size:17px;font-weight:400;color:#000;">161.175</div></div>
<div style="position:absolute;left:252px;top:763.00px;width:218px;height:25.40px;overflow:hidden"><div class="t" style="left:109.5px;top:5.21px;transform:translateX(-50%);font-size:17px;font-weight:400;color:#000;letter-spacing:0.22px;">26:02:03:N 107:23:47:W</div></div>
<div style="position:absolute;left:471px;top:763.00px;width:219px;height:25.40px;overflow:hidden"><div class="t" style="left:1px;top:5.21px;font-size:17px;letter-spacing:0.42px;color:#000">08/09/2022  16:29:15.8 UTC</div></div>
<div style="position:absolute;left:691px;top:763.00px;width:218px;height:25.40px;overflow:hidden"><div class="t" style="left:109.5px;top:5.21px;transform:translateX(-50%);font-size:17px;font-weight:400;color:#000;">8.33</div></div>
<div style="position:absolute;left:910px;top:763.00px;width:219px;height:25.40px;overflow:hidden"><div class="t" style="left:110.0px;top:5.21px;transform:translateX(-50%);font-size:17px;font-weight:400;color:#000;">1.43</div></div>
<div style="position:absolute;left:1130px;top:763.00px;width:218px;height:25.40px;overflow:hidden"><div class="t" style="left:109.5px;top:5.21px;transform:translateX(-50%);font-size:17px;font-weight:400;color:#000;">-</div></div>
<div style="position:absolute;left:1349px;top:763.00px;width:218px;height:25.40px;overflow:hidden"><div class="t" style="left:109.5px;top:5.21px;transform:translateX(-50%);font-size:17px;font-weight:400;color:#000;">1439</div></div>
<div style="position:absolute;left:33px;top:788.40px;width:218px;height:25.40px;overflow:hidden"><div class="t" style="left:109.5px;top:5.21px;transform:translateX(-50%);font-size:17px;font-weight:400;color:#000;">161.5727</div></div>
<div style="position:absolute;left:252px;top:788.40px;width:218px;height:25.40px;overflow:hidden"><div class="t" style="left:109.5px;top:5.21px;transform:translateX(-50%);font-size:17px;font-weight:400;color:#000;letter-spacing:0.22px;">25:29:11:N 107:24:18:W</div></div>
<div style="position:absolute;left:471px;top:788.40px;width:219px;height:25.40px;overflow:hidden"><div class="t" style="left:1px;top:5.21px;font-size:17px;letter-spacing:0.42px;color:#000">08/09/2022  16:13:22.1 UTC</div></div>
<div style="position:absolute;left:691px;top:788.40px;width:218px;height:25.40px;overflow:hidden"><div class="t" style="left:109.5px;top:5.21px;transform:translateX(-50%);font-size:17px;font-weight:400;color:#000;">2.11</div></div>
<div style="position:absolute;left:910px;top:788.40px;width:219px;height:25.40px;overflow:hidden"><div class="t" style="left:110.0px;top:5.21px;transform:translateX(-50%);font-size:17px;font-weight:400;color:#000;">1.4</div></div>
<div style="position:absolute;left:1130px;top:788.40px;width:218px;height:25.40px;overflow:hidden"><div class="t" style="left:109.5px;top:5.21px;transform:translateX(-50%);font-size:17px;font-weight:400;color:#000;">-</div></div>
<div style="position:absolute;left:1349px;top:788.40px;width:218px;height:25.40px;overflow:hidden"><div class="t" style="left:109.5px;top:5.21px;transform:translateX(-50%);font-size:17px;font-weight:400;color:#000;">1542</div></div>
<div style="position:absolute;left:33px;top:813.80px;width:218px;height:25.40px;overflow:hidden"><div class="t" style="left:109.5px;top:5.21px;transform:translateX(-50%);font-size:17px;font-weight:400;color:#000;">157.4685</div></div>
<div style="position:absolute;left:252px;top:813.80px;width:218px;height:25.40px;overflow:hidden"><div class="t" style="left:109.5px;top:5.21px;transform:translateX(-50%);font-size:17px;font-weight:400;color:#000;letter-spacing:0.22px;">24:51:22:N 107:12:27:W</div></div>
<div style="position:absolute;left:471px;top:813.80px;width:219px;height:25.40px;overflow:hidden"><div class="t" style="left:1px;top:5.21px;font-size:17px;letter-spacing:0.42px;color:#000">08/09/2022  15:57:06.4 UTC</div></div>
<div style="position:absolute;left:691px;top:813.80px;width:218px;height:25.40px;overflow:hidden"><div class="t" style="left:109.5px;top:5.21px;transform:translateX(-50%);font-size:17px;font-weight:400;color:#000;">12.03</div></div>
<div style="position:absolute;left:910px;top:813.80px;width:219px;height:25.40px;overflow:hidden"><div class="t" style="left:110.0px;top:5.21px;transform:translateX(-50%);font-size:17px;font-weight:400;color:#000;">1.3</div></div>
<div style="position:absolute;left:1130px;top:813.80px;width:218px;height:25.40px;overflow:hidden"><div class="t" style="left:109.5px;top:5.21px;transform:translateX(-50%);font-size:17px;font-weight:400;color:#000;">-</div></div>
<div style="position:absolute;left:1349px;top:813.80px;width:218px;height:25.40px;overflow:hidden"><div class="t" style="left:109.5px;top:5.21px;transform:translateX(-50%);font-size:17px;font-weight:400;color:#000;">18</div></div>
<div style="position:absolute;left:33px;top:839.20px;width:218px;height:25.40px;overflow:hidden"><div class="t" style="left:109.5px;top:5.21px;transform:translateX(-50%);font-size:17px;font-weight:400;color:#000;">462.4937</div></div>
<div style="position:absolute;left:252px;top:839.20px;width:218px;height:25.40px;overflow:hidden"><div class="t" style="left:109.5px;top:5.21px;transform:translateX(-50%);font-size:17px;font-weight:400;color:#000;letter-spacing:0.22px;">25:32:11:N 107:58:30:W</div></div>
<div style="position:absolute;left:471px;top:839.20px;width:219px;height:25.40px;overflow:hidden"><div class="t" style="left:1px;top:5.21px;font-size:17px;letter-spacing:0.42px;color:#000">08/09/2022  16:23:01.0 UTC</div></div>
<div style="position:absolute;left:691px;top:839.20px;width:218px;height:25.40px;overflow:hidden"><div class="t" style="left:109.5px;top:5.21px;transform:translateX(-50%);font-size:17px;font-weight:400;color:#000;">32.18</div></div>
<div style="position:absolute;left:910px;top:839.20px;width:219px;height:25.40px;overflow:hidden"><div class="t" style="left:110.0px;top:5.21px;transform:translateX(-50%);font-size:17px;font-weight:400;color:#000;">1.61</div></div>
<div style="position:absolute;left:1130px;top:839.20px;width:218px;height:25.40px;overflow:hidden"><div class="t" style="left:109.5px;top:5.21px;transform:translateX(-50%);font-size:17px;font-weight:400;color:#000;">-</div></div>
<div style="position:absolute;left:1349px;top:839.20px;width:218px;height:25.40px;overflow:hidden"><div class="t" style="left:109.5px;top:5.21px;transform:translateX(-50%);font-size:17px;font-weight:400;color:#000;">803</div></div>
<div style="position:absolute;left:33px;top:864.60px;width:218px;height:25.40px;overflow:hidden"><div class="t" style="left:109.5px;top:5.21px;transform:translateX(-50%);font-size:17px;font-weight:400;color:#000;">463.725</div></div>
<div style="position:absolute;left:252px;top:864.60px;width:218px;height:25.40px;overflow:hidden"><div class="t" style="left:109.5px;top:5.21px;transform:translateX(-50%);font-size:17px;font-weight:400;color:#000;letter-spacing:0.22px;">25:52:32:N 107:54:14:W</div></div>
<div style="position:absolute;left:471px;top:864.60px;width:219px;height:25.40px;overflow:hidden"><div class="t" style="left:1px;top:5.21px;font-size:17px;letter-spacing:0.42px;color:#000">08/09/2022  16:22:10.3 UTC</div></div>
<div style="position:absolute;left:691px;top:864.60px;width:218px;height:25.40px;overflow:hidden"><div class="t" style="left:109.5px;top:5.21px;transform:translateX(-50%);font-size:17px;font-weight:400;color:#000;">9.37</div></div>
<div style="position:absolute;left:910px;top:864.60px;width:219px;height:25.40px;overflow:hidden"><div class="t" style="left:110.0px;top:5.21px;transform:translateX(-50%);font-size:17px;font-weight:400;color:#000;">0.87</div></div>
<div style="position:absolute;left:1130px;top:864.60px;width:218px;height:25.40px;overflow:hidden"><div class="t" style="left:109.5px;top:5.21px;transform:translateX(-50%);font-size:17px;font-weight:400;color:#000;">-</div></div>
<div style="position:absolute;left:1349px;top:864.60px;width:218px;height:25.40px;overflow:hidden"><div class="t" style="left:109.5px;top:5.21px;transform:translateX(-50%);font-size:17px;font-weight:400;color:#000;">982</div></div>
<div style="position:absolute;left:33px;top:890.00px;width:218px;height:25.40px;overflow:hidden"><div class="t" style="left:109.5px;top:5.21px;transform:translateX(-50%);font-size:17px;font-weight:400;color:#000;">489.5873</div></div>
<div style="position:absolute;left:252px;top:890.00px;width:218px;height:25.40px;overflow:hidden"><div class="t" style="left:109.5px;top:5.21px;transform:translateX(-50%);font-size:17px;font-weight:400;color:#000;letter-spacing:0.22px;">25:37:54:N 107:24:58:W</div></div>
<div style="position:absolute;left:471px;top:890.00px;width:219px;height:25.40px;overflow:hidden"><div class="t" style="left:1px;top:5.21px;font-size:17px;letter-spacing:0.42px;color:#000">08/09/2022  16:29:40.9 UTC</div></div>
<div style="position:absolute;left:691px;top:890.00px;width:218px;height:25.40px;overflow:hidden"><div class="t" style="left:109.5px;top:5.21px;transform:translateX(-50%);font-size:17px;font-weight:400;color:#000;">8.94</div></div>
<div style="position:absolute;left:910px;top:890.00px;width:219px;height:25.40px;overflow:hidden"><div class="t" style="left:110.0px;top:5.21px;transform:translateX(-50%);font-size:17px;font-weight:400;color:#000;">0.92</div></div>
<div style="position:absolute;left:1130px;top:890.00px;width:218px;height:25.40px;overflow:hidden"><div class="t" style="left:109.5px;top:5.21px;transform:translateX(-50%);font-size:17px;font-weight:400;color:#000;">-</div></div>
<div style="position:absolute;left:1349px;top:890.00px;width:218px;height:25.40px;overflow:hidden"><div class="t" style="left:109.5px;top:5.21px;transform:translateX(-50%);font-size:17px;font-weight:400;color:#000;">2921</div></div>
<div style="position:absolute;left:33px;top:915.40px;width:218px;height:25.40px;overflow:hidden"><div class="t" style="left:109.5px;top:5.21px;transform:translateX(-50%);font-size:17px;font-weight:400;color:#000;">485.3</div></div>
<div style="position:absolute;left:252px;top:915.40px;width:218px;height:25.40px;overflow:hidden"><div class="t" style="left:109.5px;top:5.21px;transform:translateX(-50%);font-size:17px;font-weight:400;color:#000;letter-spacing:0.22px;">25:05:02:N 107:41:41:W</div></div>
<div style="position:absolute;left:471px;top:915.40px;width:219px;height:25.40px;overflow:hidden"><div class="t" style="left:1px;top:5.21px;font-size:17px;letter-spacing:0.42px;color:#000">08/09/2022  16:05:36.2 UTC</div></div>
<div style="position:absolute;left:691px;top:915.40px;width:218px;height:25.40px;overflow:hidden"><div class="t" style="left:109.5px;top:5.21px;transform:translateX(-50%);font-size:17px;font-weight:400;color:#000;">1.62</div></div>
<div style="position:absolute;left:910px;top:915.40px;width:219px;height:25.40px;overflow:hidden"><div class="t" style="left:110.0px;top:5.21px;transform:translateX(-50%);font-size:17px;font-weight:400;color:#000;">0.37</div></div>
<div style="position:absolute;left:1130px;top:915.40px;width:218px;height:25.40px;overflow:hidden"><div class="t" style="left:109.5px;top:5.21px;transform:translateX(-50%);font-size:17px;font-weight:400;color:#000;">-</div></div>
<div style="position:absolute;left:1349px;top:915.40px;width:218px;height:25.40px;overflow:hidden"><div class="t" style="left:109.5px;top:5.21px;transform:translateX(-50%);font-size:17px;font-weight:400;color:#000;">1338</div></div>
<div style="position:absolute;left:33px;top:940.80px;width:218px;height:25.40px;overflow:hidden"><div class="t" style="left:109.5px;top:5.21px;transform:translateX(-50%);font-size:17px;font-weight:400;color:#000;">445.1937</div></div>
<div style="position:absolute;left:252px;top:940.80px;width:218px;height:25.40px;overflow:hidden"><div class="t" style="left:109.5px;top:5.21px;transform:translateX(-50%);font-size:17px;font-weight:400;color:#000;letter-spacing:0.22px;">27:12:16:N 108:18:30:W</div></div>
<div style="position:absolute;left:471px;top:940.80px;width:219px;height:25.40px;overflow:hidden"><div class="t" style="left:1px;top:5.21px;font-size:17px;letter-spacing:0.42px;color:#000">08/09/2022  16:29:41.6 UTC</div></div>
<div style="position:absolute;left:691px;top:940.80px;width:218px;height:25.40px;overflow:hidden"><div class="t" style="left:109.5px;top:5.21px;transform:translateX(-50%);font-size:17px;font-weight:400;color:#000;">47.03</div></div>
<div style="position:absolute;left:910px;top:940.80px;width:219px;height:25.40px;overflow:hidden"><div class="t" style="left:110.0px;top:5.21px;transform:translateX(-50%);font-size:17px;font-weight:400;color:#000;">1.94</div></div>
<div style="position:absolute;left:1130px;top:940.80px;width:218px;height:25.40px;overflow:hidden"><div class="t" style="left:109.5px;top:5.21px;transform:translateX(-50%);font-size:17px;font-weight:400;color:#000;">-</div></div>
<div style="position:absolute;left:1349px;top:940.80px;width:218px;height:25.40px;overflow:hidden"><div class="t" style="left:109.5px;top:5.21px;transform:translateX(-50%);font-size:17px;font-weight:400;color:#000;">386</div></div>
<div style="position:absolute;left:33px;top:966.20px;width:218px;height:25.40px;overflow:hidden"><div class="t" style="left:109.5px;top:5.21px;transform:translateX(-50%);font-size:17px;font-weight:400;color:#000;">453.1373</div></div>
<div style="position:absolute;left:252px;top:966.20px;width:218px;height:25.40px;overflow:hidden"><div class="t" style="left:109.5px;top:5.21px;transform:translateX(-50%);font-size:17px;font-weight:400;color:#000;letter-spacing:0.22px;">25:22:21:N 108:01:49:W</div></div>
<div style="position:absolute;left:471px;top:966.20px;width:219px;height:25.40px;overflow:hidden"><div class="t" style="left:1px;top:5.21px;font-size:17px;letter-spacing:0.42px;color:#000">08/09/2022  15:56:08.6 UTC</div></div>
<div style="position:absolute;left:691px;top:966.20px;width:218px;height:25.40px;overflow:hidden"><div class="t" style="left:109.5px;top:5.21px;transform:translateX(-50%);font-size:17px;font-weight:400;color:#000;">15.01</div></div>
<div style="position:absolute;left:910px;top:966.20px;width:219px;height:25.40px;overflow:hidden"><div class="t" style="left:110.0px;top:5.21px;transform:translateX(-50%);font-size:17px;font-weight:400;color:#000;">2.42</div></div>
<div style="position:absolute;left:1130px;top:966.20px;width:218px;height:25.40px;overflow:hidden"><div class="t" style="left:109.5px;top:5.21px;transform:translateX(-50%);font-size:17px;font-weight:400;color:#000;">-</div></div>
<div style="position:absolute;left:1349px;top:966.20px;width:218px;height:25.40px;overflow:hidden"><div class="t" style="left:109.5px;top:5.21px;transform:translateX(-50%);font-size:17px;font-weight:400;color:#000;">2947</div></div>
<div style="position:absolute;left:33px;top:991.60px;width:218px;height:25.40px;overflow:hidden"><div class="t" style="left:109.5px;top:5.21px;transform:translateX(-50%);font-size:17px;font-weight:400;color:#000;">452.8127</div></div>
<div style="position:absolute;left:252px;top:991.60px;width:218px;height:25.40px;overflow:hidden"><div class="t" style="left:109.5px;top:5.21px;transform:translateX(-50%);font-size:17px;font-weight:400;color:#000;letter-spacing:0.22px;">25:18:34:N 107:40:48:W</div></div>
<div style="position:absolute;left:471px;top:991.60px;width:219px;height:25.40px;overflow:hidden"><div class="t" style="left:1px;top:5.21px;font-size:17px;letter-spacing:0.42px;color:#000">08/09/2022  15:48:03.4 UTC</div></div>
<div style="position:absolute;left:691px;top:991.60px;width:218px;height:25.40px;overflow:hidden"><div class="t" style="left:109.5px;top:5.21px;transform:translateX(-50%);font-size:17px;font-weight:400;color:#000;">35.72</div></div>
<div style="position:absolute;left:910px;top:991.60px;width:219px;height:25.40px;overflow:hidden"><div class="t" style="left:110.0px;top:5.21px;transform:translateX(-50%);font-size:17px;font-weight:400;color:#000;">0.78</div></div>
<div style="position:absolute;left:1130px;top:991.60px;width:218px;height:25.40px;overflow:hidden"><div class="t" style="left:109.5px;top:5.21px;transform:translateX(-50%);font-size:17px;font-weight:400;color:#000;">2337</div></div>
<div style="position:absolute;left:1349px;top:991.60px;width:218px;height:25.40px;overflow:hidden"><div class="t" style="left:109.5px;top:5.21px;transform:translateX(-50%);font-size:17px;font-weight:400;color:#000;">2321</div></div>
<div style="position:absolute;left:31px;top:355px;width:222px;height:27px;border:2px solid #107c41;box-sizing:border-box;background:transparent"></div>
<div style="position:absolute;left:248px;top:378px;width:7px;height:7px;background:#107c41;border:1px solid #fff;box-sizing:border-box"></div>
<div style="position:absolute;left:0px;top:1021px;width:1920px;height:31px;background:#e6e6e6"></div>
<div style="position:absolute;left:0px;top:1021px;width:1920px;height:1px;background:#a6a6a6"></div>
<div style="position:absolute;left:106px;top:1021px;width:197px;height:29px;background:#fff;border-left:1px solid #a6a6a6;border-right:1px solid #a6a6a6;box-sizing:border-box"></div>
<div style="position:absolute;left:107px;top:1046px;width:195px;height:2.3px;background:#107c41"></div>
<div class="t" style="left:119.80px;top:1024.69px;font-size:17.5px;color:#217346;font-weight:700;transform-origin:0 0;transform:scaleX(1.0276);">20220809_GeoTable</div>
<svg style="position:absolute;left:26px;top:1031px;" width="7" height="11" viewBox="0 0 7 11"><path d="M6.5 0.5 V10.5 L0.5 5.5 Z" fill="#c0c0c0"/></svg>
<svg style="position:absolute;left:57px;top:1031px;" width="7" height="11" viewBox="0 0 7 11"><path d="M0.5 0.5 V10.5 L6.5 5.5 Z" fill="#c0c0c0"/></svg>
<svg style="position:absolute;left:337px;top:1026px;" width="23" height="23" viewBox="0 0 23 23"><circle cx="11.5" cy="11" r="10" fill="none" stroke="#7a7a7a" stroke-width="1.3"/><path d="M11.5 5.5 V16.5 M6 11 H17" stroke="#7a7a7a" stroke-width="1.5"/></svg>
<div style="position:absolute;left:1214px;top:1030px;width:3px;height:3px;background:#b0b0b0"></div>
<div style="position:absolute;left:1214px;top:1035px;width:3px;height:3px;background:#b0b0b0"></div>
<div style="position:absolute;left:1214px;top:1040px;width:3px;height:3px;background:#b0b0b0"></div>
<div style="position:absolute;left:1893px;top:1025px;width:27px;height:23px;background:#f2f2f2"></div>
<div style="position:absolute;left:1233px;top:1026px;width:659px;height:21px;background:#fff;border:1.6px solid #9a9a9a;border-radius:1px;box-sizing:border-box"></div>
<div style="position:absolute;left:1252px;top:1027px;width:1.6px;height:19px;background:#9a9a9a"></div>
<svg style="position:absolute;left:1239px;top:1032px;" width="6" height="10" viewBox="0 0 6 10"><path d="M5.5 0 V10 L0 5 Z" fill="#222"/></svg>
<div style="position:absolute;left:0px;top:1052px;width:1920px;height:28px;background:#f3f3f3"></div>
<div style="position:absolute;left:0px;top:1052px;width:1920px;height:1px;background:#cdcdcd"></div>
<div class="t" style="left:5.86px;top:1060.14px;font-size:13.3px;color:#333;font-weight:400;transform-origin:0 0;transform:scaleX(1.0415);">Listo</div>
<svg style="position:absolute;left:55px;top:1053px;" width="30" height="27" viewBox="0 0 30 27"><path d="M12.5 6.2 A8 8 0 0 0 13.5 21.6" fill="none" stroke="#444" stroke-width="1.5" stroke-dasharray="5 2.3"/>
<path d="M14.5 5 V13" stroke="#444" stroke-width="1.2"/><path d="M12 11.5 H17 L14.5 15 Z" fill="#444"/>
<path d="M17.5 12 H21" stroke="#444" stroke-width="1.3"/><path d="M20.5 9.5 V14.5 L23.8 12 Z" fill="#444"/>
<path d="M16 18.8 L19.5 22.8 L26 14.5" fill="none" stroke="#444" stroke-width="2.3"/></svg>
<div class="t" style="left:84.20px;top:1059.97px;font-size:13.5px;color:#333;font-weight:400;transform-origin:0 0;transform:scaleX(1.0524);">Accesibilidad: todo correcto</div>
<div style="position:absolute;left:1637px;top:1052px;width:53px;height:28px;background:#c6c6c6"></div>
<svg style="position:absolute;left:1654.5px;top:1058px;" width="19" height="19" viewBox="0 0 19 19"><rect x="0.5" y="0.5" width="16.5" height="16.5" fill="none" stroke="#666" stroke-width="1.1"/><path d="M6 0.5 V17 M11.5 0.5 V17 M0.5 6 H17 M0.5 11.5 H17" stroke="#666" stroke-width="1.4"/></svg>
<svg style="position:absolute;left:1707px;top:1058px;" width="19" height="19" viewBox="0 0 19 19"><rect x="0.5" y="0.5" width="17" height="16" fill="none" stroke="#666" stroke-width="1.1"/><path d="M4 2.8 H11.5 L13.8 5 V14 H4 Z" fill="none" stroke="#666" stroke-width="1"/><path d="M5.8 6 H11.8 M5.8 8.3 H11.8 M5.8 10.6 H11.8" stroke="#666" stroke-width="1"/></svg>
<svg style="position:absolute;left:1760px;top:1058px;" width="19" height="19" viewBox="0 0 19 19"><rect x="0.5" y="0.5" width="17" height="16.5" fill="none" stroke="#666" stroke-width="1.1"/><path d="M0.5 10.5 H11 V0.5 M5.5 0.5 V10.5 M8.3 0.5 V10.5" fill="none" stroke="#666" stroke-width="1"/></svg>
<div style="position:absolute;left:1803px;top:1066px;width:10px;height:1.5px;background:#555"></div>
<div style="position:absolute;left:1820px;top:1066.2px;width:100px;height:1.6px;background:#555"></div>
<div style="position:absolute;left:1884px;top:1059px;width:6px;height:15px;background:#444"></div>
</body></html>
